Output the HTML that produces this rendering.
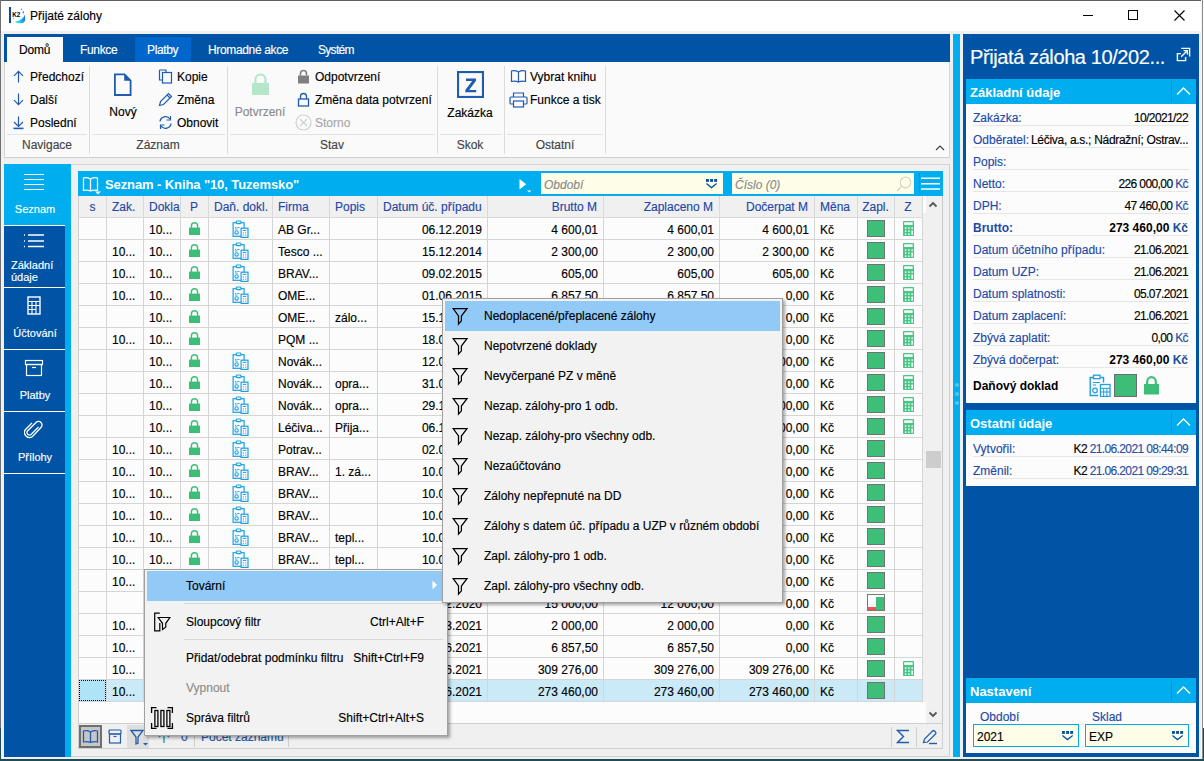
<!DOCTYPE html><html><head><meta charset="utf-8"><style>
html,body{margin:0;padding:0;}
body{width:1204px;height:761px;position:relative;overflow:hidden;background:#f0f0f0;font-family:"Liberation Sans",sans-serif;font-size:12px;color:#000;-webkit-text-stroke:0.15px currentColor;}
[style*="font-weight:bold"]{-webkit-text-stroke:0;}
div{box-sizing:border-box;}
</style></head><body>
<div style="position:absolute;left:0px;top:0px;width:1204px;height:761px;background:#f0f0f0"></div>
<div style="position:absolute;left:0px;top:0px;width:1204px;height:1px;background:#5e5e5e"></div>
<div style="position:absolute;left:0px;top:0px;width:1px;height:761px;background:#707070"></div>
<div style="position:absolute;left:1201px;top:0px;width:1px;height:761px;background:#f4f4f4"></div>
<div style="position:absolute;left:1202px;top:0px;width:1px;height:761px;background:#8a8a8a"></div>
<div style="position:absolute;left:1203px;top:0px;width:1px;height:761px;background:#ffffff"></div>
<div style="position:absolute;left:1203px;top:728px;width:1px;height:33px;background:#1e4d58"></div>
<div style="position:absolute;left:0px;top:728px;width:1px;height:33px;background:#1e4d58"></div>
<div style="position:absolute;left:0px;top:759px;width:1204px;height:2px;background:#1e4d58"></div>
<div style="position:absolute;left:1px;top:1px;width:1200px;height:30px;background:#ffffff"></div>
<svg style="position:absolute;left:8px;top:6px;" width="19" height="19" viewBox="0 0 19 19"><defs><linearGradient id="k2g" x1="0" y1="0" x2="1" y2="0"><stop offset="0" stop-color="#3ef0c8"/><stop offset="0.5" stop-color="#1ad0f0"/><stop offset="1" stop-color="#1a6ff0"/></linearGradient></defs><rect x="1" y="1" width="2" height="16" fill="#0d48a0"/><text x="4.3" y="11" font-family="Liberation Sans" font-weight="bold" font-size="6.3" fill="#000">K2</text><path d="M7 15.5 Q11 15 13.5 13 Q16 11.5 17 8.5 L17.2 14 Q16.5 17 13 17.2 L9 17 Z" fill="url(#k2g)"/><circle cx="13.5" cy="3.2" r="0.8" fill="#4a8cf0"/><ellipse cx="15.3" cy="6.3" rx="0.6" ry="1.3" fill="#3a7ef0"/><circle cx="5.5" cy="12.5" r="0.6" fill="#8ab4f0"/></svg>
<div style="position:absolute;left:30px;top:9px;white-space:nowrap;font-size:12px;line-height:14px;color:#000">Přijaté zálohy</div>
<div style="position:absolute;left:1083px;top:15px;width:10px;height:1px;background:#000"></div>
<div style="position:absolute;left:1128px;top:10px;width:10px;height:10px;border:1px solid #000"></div>
<svg style="position:absolute;left:1174px;top:10px;" width="11" height="11" viewBox="0 0 11 11"><path d="M0.5 0.5 L10.5 10.5 M10.5 0.5 L0.5 10.5" stroke="#000" stroke-width="1.1"/></svg>
<div style="position:absolute;left:4px;top:34px;width:946px;height:28px;background:#0053a5"></div>
<div style="position:absolute;left:7px;top:37px;width:56px;height:25px;background:#fafafa"></div>
<div style="position:absolute;left:135px;top:37px;width:56px;height:25px;background:#0066cc"></div>
<div style="position:absolute;left:19px;top:43px;white-space:nowrap;font-size:12px;line-height:14px;color:#000;letter-spacing:-0.2px">Domů</div>
<div style="position:absolute;left:80px;top:43px;white-space:nowrap;font-size:12px;line-height:14px;color:#fff;letter-spacing:-0.35px">Funkce</div>
<div style="position:absolute;left:147px;top:43px;white-space:nowrap;font-size:12px;line-height:14px;color:#fff;letter-spacing:-0.35px">Platby</div>
<div style="position:absolute;left:208px;top:43px;white-space:nowrap;font-size:12px;line-height:14px;color:#fff;letter-spacing:-0.35px">Hromadné akce</div>
<div style="position:absolute;left:318px;top:43px;white-space:nowrap;font-size:12px;line-height:14px;color:#fff;letter-spacing:-0.7px">Systém</div>
<div style="position:absolute;left:4px;top:62px;width:946px;height:96px;background:#fafafa;border-left:1px solid #d5d5d5;border-right:1px solid #d5d5d5;border-bottom:1px solid #cfcfcf"></div>
<div style="position:absolute;left:89px;top:66px;width:1px;height:88px;background:#dcdcdc"></div>
<div style="position:absolute;left:227px;top:66px;width:1px;height:88px;background:#dcdcdc"></div>
<div style="position:absolute;left:437px;top:66px;width:1px;height:88px;background:#dcdcdc"></div>
<div style="position:absolute;left:504px;top:66px;width:1px;height:88px;background:#dcdcdc"></div>
<div style="position:absolute;left:605px;top:66px;width:1px;height:88px;background:#dcdcdc"></div>
<div style="position:absolute;left:7px;top:134px;width:80px;height:1px;background:#e3e3e3"></div>
<div style="position:absolute;left:92px;top:134px;width:133px;height:1px;background:#e3e3e3"></div>
<div style="position:absolute;left:230px;top:134px;width:205px;height:1px;background:#e3e3e3"></div>
<div style="position:absolute;left:440px;top:134px;width:62px;height:1px;background:#e3e3e3"></div>
<div style="position:absolute;left:507px;top:134px;width:96px;height:1px;background:#e3e3e3"></div>
<div style="position:absolute;left:-153px;width:400px;text-align:center;top:138px;white-space:nowrap;font-size:12px;line-height:14px;color:#444">Navigace</div>
<div style="position:absolute;left:-42px;width:400px;text-align:center;top:138px;white-space:nowrap;font-size:12px;line-height:14px;color:#444">Záznam</div>
<div style="position:absolute;left:132px;width:400px;text-align:center;top:138px;white-space:nowrap;font-size:12px;line-height:14px;color:#444">Stav</div>
<div style="position:absolute;left:270px;width:400px;text-align:center;top:138px;white-space:nowrap;font-size:12px;line-height:14px;color:#444">Skok</div>
<div style="position:absolute;left:355px;width:400px;text-align:center;top:138px;white-space:nowrap;font-size:12px;line-height:14px;color:#444">Ostatní</div>
<svg style="position:absolute;left:935px;top:145px;" width="10" height="6" viewBox="0 0 10 6"><path d="M1 5 L5 1 L9 5" stroke="#444" stroke-width="1.2" fill="none"/></svg>
<svg style="position:absolute;left:12px;top:69px;" width="13" height="15" viewBox="0 0 13 15"><path d="M6.5 13.5 V2.3 M2 6.8 L6.5 2.3 L11 6.8" stroke="#1f5cae" stroke-width="1.2" fill="none"/></svg>
<svg style="position:absolute;left:12px;top:92px;" width="13" height="15" viewBox="0 0 13 15"><path d="M6.5 1.5 V12.7 M2 8.2 L6.5 12.7 L11 8.2" stroke="#1f5cae" stroke-width="1.2" fill="none"/></svg>
<svg style="position:absolute;left:12px;top:115px;" width="13" height="15" viewBox="0 0 13 15"><path d="M6.5 1.5 V11.5 M2 7 L6.5 11.5 L11 7" stroke="#1f5cae" stroke-width="1.2" fill="none"/><path d="M1.5 13.4 H11.5" stroke="#1f5cae" stroke-width="1.6"/></svg>
<div style="position:absolute;left:30px;top:70px;white-space:nowrap;font-size:12px;line-height:14px;">Předchozí</div>
<div style="position:absolute;left:30px;top:93px;white-space:nowrap;font-size:12px;line-height:14px;">Další</div>
<div style="position:absolute;left:30px;top:116px;white-space:nowrap;font-size:12px;line-height:14px;">Poslední</div>
<svg style="position:absolute;left:113px;top:73px;" width="20" height="24" viewBox="0 0 20 24"><path d="M1.9 1.4 L11.5 1.4 L17.6 7.5 L17.6 22 L1.9 22 Z" stroke="#1f5cae" stroke-width="1.8" fill="none"/><path d="M11.2 1.4 L11.2 7.8 L17.6 7.8 Z" fill="#1f5cae"/></svg>
<div style="position:absolute;left:-77px;width:400px;text-align:center;top:105px;white-space:nowrap;font-size:12px;line-height:14px;">Nový</div>
<svg style="position:absolute;left:158px;top:69px;" width="15" height="15" viewBox="0 0 15 15"><path d="M1.5 1 L8 1 L8 3 M1.5 1 L1.5 11 L4 11" stroke="#1f5cae" stroke-width="1.2" fill="none"/><rect x="4.5" y="3.5" width="9" height="10.5" stroke="#1f5cae" stroke-width="1.2" fill="none"/></svg>
<div style="position:absolute;left:177px;top:70px;white-space:nowrap;font-size:12px;line-height:14px;">Kopie</div>
<svg style="position:absolute;left:158px;top:92px;" width="15" height="15" viewBox="0 0 15 15"><path d="M1.5 13.5 L2.5 9.5 L10.5 1.5 L13.5 4.5 L5.5 12.5 Z M9 3 L12 6" stroke="#1f5cae" stroke-width="1.2" fill="none"/></svg>
<div style="position:absolute;left:177px;top:93px;white-space:nowrap;font-size:12px;line-height:14px;">Změna</div>
<svg style="position:absolute;left:158px;top:115px;" width="15" height="15" viewBox="0 0 15 15"><path d="M2 6.5 A5.5 5.5 0 0 1 12 4 M13 8.5 A5.5 5.5 0 0 1 3 11" stroke="#1f5cae" stroke-width="1.3" fill="none"/><path d="M12.5 1 L12.5 5 L8.5 5" stroke="#1f5cae" stroke-width="1.2" fill="none"/><path d="M2.5 14 L2.5 10 L6.5 10" stroke="#1f5cae" stroke-width="1.2" fill="none"/></svg>
<div style="position:absolute;left:177px;top:116px;white-space:nowrap;font-size:12px;line-height:14px;">Obnovit</div>
<svg style="position:absolute;left:251px;top:73px;" width="19" height="23" viewBox="0 0 19 23"><path d="M4.5 10 L4.5 6.5 A5 5 0 0 1 14.5 6.5 L14.5 10" stroke="#b5e6c9" stroke-width="2.2" fill="none"/><rect x="1" y="10" width="17" height="12" fill="#b5e6c9"/></svg>
<div style="position:absolute;left:60px;width:400px;text-align:center;top:105px;white-space:nowrap;font-size:12px;line-height:14px;color:#8c8c8c">Potvrzení</div>
<svg style="position:absolute;left:297px;top:69px;" width="13" height="15" viewBox="0 0 13 15"><path d="M3.5 6.5 L3.5 4.5 A3 3 0 0 1 9.5 4.5 L9.5 6.5" stroke="#808080" stroke-width="1.6" fill="none"/><rect x="1" y="6.5" width="11" height="8" fill="#808080"/></svg>
<div style="position:absolute;left:315px;top:70px;white-space:nowrap;font-size:12px;line-height:14px;">Odpotvrzení</div>
<svg style="position:absolute;left:297px;top:92px;" width="13" height="15" viewBox="0 0 13 15"><path d="M3.5 7 L3.5 4.5 A3 3 0 0 1 9.5 4.5 L9.5 7" stroke="#1f5cae" stroke-width="1.3" fill="none"/><rect x="1.5" y="7" width="10" height="7" stroke="#1f5cae" stroke-width="1.3" fill="none"/></svg>
<div style="position:absolute;left:315px;top:93px;white-space:nowrap;font-size:12px;line-height:14px;">Změna data potvrzení</div>
<svg style="position:absolute;left:295px;top:114px;" width="17" height="17" viewBox="0 0 17 17"><circle cx="8.5" cy="8.5" r="7.5" stroke="#cfcfcf" stroke-width="1.2" fill="none"/><path d="M5 5 L12 12 M12 5 L5 12" stroke="#cfcfcf" stroke-width="1.1"/></svg>
<div style="position:absolute;left:315px;top:116px;white-space:nowrap;font-size:12px;line-height:14px;color:#a8a8a8">Storno</div>
<svg style="position:absolute;left:457px;top:71px;" width="27" height="27" viewBox="0 0 27 27"><rect x="1.05" y="1.05" width="24.9" height="24.9" stroke="#1f5cae" stroke-width="2.1" fill="none"/><path d="M9 7.6 H19 V9.8 L12.1 18.9 H19.2 V21.2 H8.3 V19 L15.2 9.9 H9 Z" fill="#1f5cae"/></svg>
<div style="position:absolute;left:270px;width:400px;text-align:center;top:106px;white-space:nowrap;font-size:12px;line-height:14px;">Zakázka</div>
<svg style="position:absolute;left:510px;top:69px;" width="17" height="14" viewBox="0 0 17 14"><path d="M8.5 3 Q5 1 1.5 2 L1.5 12.5 Q5 11.5 8.5 13 Q12 11.5 15.5 12.5 L15.5 2 Q12 1 8.5 3 Z M8.5 3 L8.5 13" stroke="#1f5cae" stroke-width="1.2" fill="none"/></svg>
<div style="position:absolute;left:530px;top:70px;white-space:nowrap;font-size:12px;line-height:14px;">Vybrat knihu</div>
<svg style="position:absolute;left:509px;top:92px;" width="19" height="16" viewBox="0 0 19 16"><path d="M4.5 5 L4.5 1 L14.5 1 L14.5 5" stroke="#1f5cae" stroke-width="1.2" fill="none"/><rect x="1" y="5" width="17" height="7" rx="1" stroke="#1f5cae" stroke-width="1.2" fill="none"/><rect x="4.5" y="9" width="10" height="6" stroke="#1f5cae" stroke-width="1.2" fill="#fafafa"/></svg>
<div style="position:absolute;left:530px;top:93px;white-space:nowrap;font-size:12px;line-height:14px;">Funkce a tisk</div>
<div style="position:absolute;left:4px;top:164px;width:946px;height:593px;background:#f0f0f0;border-right:1px solid #cfcfcf;border-bottom:1px solid #cfcfcf"></div>
<div style="position:absolute;left:71px;top:164px;width:879px;height:1px;background:#d4d4d4"></div>
<div style="position:absolute;left:4px;top:164px;width:67px;height:593px;background:#00adef"></div>
<div style="position:absolute;left:4px;top:225px;width:61px;height:1px;background:#ffffff"></div>
<div style="position:absolute;left:4px;top:226px;width:61px;height:61px;background:#0053a5"></div>
<div style="position:absolute;left:4px;top:287px;width:61px;height:1px;background:#ffffff"></div>
<div style="position:absolute;left:4px;top:288px;width:61px;height:61px;background:#0053a5"></div>
<div style="position:absolute;left:4px;top:349px;width:61px;height:1px;background:#ffffff"></div>
<div style="position:absolute;left:4px;top:350px;width:61px;height:61px;background:#0053a5"></div>
<div style="position:absolute;left:4px;top:411px;width:61px;height:1px;background:#ffffff"></div>
<div style="position:absolute;left:4px;top:412px;width:61px;height:61px;background:#0053a5"></div>
<div style="position:absolute;left:4px;top:473px;width:61px;height:1px;background:#ffffff"></div>
<div style="position:absolute;left:4px;top:474px;width:61px;height:283px;background:#0053a5"></div>
<svg style="position:absolute;left:24px;top:173px;" width="21" height="18" viewBox="0 0 21 18"><path d="M0 1.5 H20 M0 6.5 H20 M0 11.5 H20 M0 16.5 H20" stroke="#fff" stroke-width="1.2"/></svg>
<div style="position:absolute;left:-165px;width:400px;text-align:center;top:203px;white-space:nowrap;font-size:11px;line-height:13px;color:#fff">Seznam</div>
<svg style="position:absolute;left:23px;top:233px;" width="22" height="16" viewBox="0 0 22 16"><path d="M5 2 H21 M5 8 H21 M5 13.5 H21" stroke="#fff" stroke-width="1.3"/><path d="M1 2 H2 M1 8 H2 M1 13.5 H2" stroke="#fff" stroke-width="1.3"/></svg>
<div style="position:absolute;left:11px;top:259px;white-space:nowrap;font-size:11px;line-height:13px;color:#fff">Základní</div>
<div style="position:absolute;left:11px;top:271px;white-space:nowrap;font-size:11px;line-height:13px;color:#fff">údaje</div>
<svg style="position:absolute;left:27px;top:296px;" width="14" height="19" viewBox="0 0 14 19"><rect x="1" y="1" width="12" height="17" stroke="#fff" stroke-width="1.4" fill="none"/><path d="M1 5.5 H13 M1 9.5 H13 M1 13.5 H9 M5 5.5 V18 M9 5.5 V18" stroke="#fff" stroke-width="1.1"/></svg>
<div style="position:absolute;left:-165px;width:400px;text-align:center;top:327px;white-space:nowrap;font-size:11px;line-height:13px;color:#fff">Účtování</div>
<svg style="position:absolute;left:24px;top:359px;" width="20" height="18" viewBox="0 0 20 18"><rect x="1.5" y="1.5" width="17" height="4" stroke="#fff" stroke-width="1.2" fill="none"/><rect x="2.5" y="5.5" width="15" height="11" stroke="#fff" stroke-width="1.2" fill="none"/><path d="M8 8.5 H12" stroke="#fff" stroke-width="1.2"/></svg>
<div style="position:absolute;left:-165px;width:400px;text-align:center;top:389px;white-space:nowrap;font-size:11px;line-height:13px;color:#fff">Platby</div>
<svg style="position:absolute;left:24px;top:420px;" width="20" height="21" viewBox="0 0 20 21"><path d="M14.5 7 L7 14.5 A2.5 2.5 0 0 1 3.5 11 L12 2.5 A3.5 3.5 0 0 1 17 7.5 L8.5 16.5 A5 5 0 0 1 1.5 9.5 L8 3" stroke="#fff" stroke-width="1.3" fill="none" transform="rotate(0)"/></svg>
<div style="position:absolute;left:-165px;width:400px;text-align:center;top:451px;white-space:nowrap;font-size:11px;line-height:13px;color:#fff">Přílohy</div>
<div style="position:absolute;left:78px;top:171px;width:865px;height:25px;background:#00adef"></div>
<svg style="position:absolute;left:82px;top:176px;" width="20" height="19" viewBox="0 0 20 19"><path d="M8.5 3 Q5 1 1.5 2 L1.5 14.5 Q5 13.5 8.5 15 Q12 13.5 15.5 14.5 L15.5 2 Q12 1 8.5 3 Z M8.5 3 L8.5 15" stroke="#fff" stroke-width="1.3" fill="none"/><path d="M13 15.5 L19 15.5 L16 18.5 Z" fill="#fff"/></svg>
<div style="position:absolute;left:105px;top:177px;white-space:nowrap;font-size:13px;line-height:15px;color:#fff;font-weight:bold;letter-spacing:-0.1px">Seznam - Kniha "10, Tuzemsko"</div>
<svg style="position:absolute;left:519px;top:178px;" width="14" height="16" viewBox="0 0 14 16"><path d="M0.5 1 L7.2 6.3 L0.5 11.6 Z" fill="#fff"/><path d="M8 12.4 L12.5 12.4 L10.25 14.6 Z" fill="#fff"/></svg>
<div style="position:absolute;left:541px;top:173px;width:182px;height:21px;background:#fefde8"></div>
<div style="position:absolute;left:544px;top:178px;white-space:nowrap;font-size:12px;line-height:14px;color:#8a8a8a;font-style:italic">Období</div>
<svg style="position:absolute;left:706px;top:179px;" width="12" height="10" viewBox="0 0 12 10"><rect x="0" y="0" width="2.9" height="2.9" fill="#0053a5"/><rect x="4.1" y="0" width="2.9" height="2.9" fill="#0053a5"/><rect x="8.2" y="0" width="2.9" height="2.9" fill="#0053a5"/><path d="M0.4 4.4 L5.5 8.6 L10.7 4.4" stroke="#0053a5" stroke-width="1.25" fill="none"/></svg>
<div style="position:absolute;left:732px;top:173px;width:182px;height:21px;background:#fefde8"></div>
<div style="position:absolute;left:735px;top:178px;white-space:nowrap;font-size:12px;line-height:14px;color:#8a8a8a;font-style:italic">Číslo (0)</div>
<svg style="position:absolute;left:896px;top:176px;" width="16" height="16" viewBox="0 0 16 16"><circle cx="9.5" cy="6.5" r="5.3" stroke="#d5d5c8" stroke-width="1.2" fill="none"/><path d="M5.7 10.3 L1 15" stroke="#d5d5c8" stroke-width="1.4"/></svg>
<div style="position:absolute;left:919px;top:173px;width:1px;height:21px;background:#1a8fce"></div>
<svg style="position:absolute;left:921px;top:176px;" width="20" height="15" viewBox="0 0 20 15"><path d="M0 2.3 H19 M0 7.8 H19 M0 13.1 H19" stroke="#fff" stroke-width="1.5"/></svg>
<div style="position:absolute;left:78px;top:196px;width:1px;height:528px;background:#cfcfcf"></div>
<div style="position:absolute;left:79px;top:196px;width:843px;height:22px;background:#f0f0f0"></div>
<div style="position:absolute;left:79px;top:217px;width:843px;height:1px;background:#d9d9d9"></div>
<div style="position:absolute;left:79px;top:218px;width:843px;height:506px;background:#fcfcfc"></div>
<div style="position:absolute;left:79px;width:27px;top:200px;text-align:center;white-space:nowrap;overflow:hidden;line-height:14px;color:#1f48a8">s</div>
<div style="position:absolute;left:112px;width:31px;top:200px;white-space:nowrap;overflow:hidden;line-height:14px;color:#1f48a8">Zak.</div>
<div style="position:absolute;left:149px;width:31px;top:200px;white-space:nowrap;overflow:hidden;line-height:14px;color:#1f48a8">Dokla</div>
<div style="position:absolute;left:180px;width:28px;top:200px;text-align:center;white-space:nowrap;overflow:hidden;line-height:14px;color:#1f48a8">P</div>
<div style="position:absolute;left:214px;width:58px;top:200px;white-space:nowrap;overflow:hidden;line-height:14px;color:#1f48a8">Daň. dokl.</div>
<div style="position:absolute;left:278px;width:51px;top:200px;white-space:nowrap;overflow:hidden;line-height:14px;color:#1f48a8">Firma</div>
<div style="position:absolute;left:335px;width:42px;top:200px;white-space:nowrap;overflow:hidden;line-height:14px;color:#1f48a8">Popis</div>
<div style="position:absolute;left:383px;width:104px;top:200px;white-space:nowrap;overflow:hidden;line-height:14px;color:#1f48a8">Datum úč. případu</div>
<div style="position:absolute;left:487px;width:110px;top:200px;text-align:right;white-space:nowrap;overflow:hidden;line-height:14px;color:#1f48a8">Brutto M</div>
<div style="position:absolute;left:603px;width:110px;top:200px;text-align:right;white-space:nowrap;overflow:hidden;line-height:14px;color:#1f48a8">Zaplaceno M</div>
<div style="position:absolute;left:719px;width:89px;top:200px;text-align:right;white-space:nowrap;overflow:hidden;line-height:14px;color:#1f48a8">Dočerpat M</div>
<div style="position:absolute;left:820px;width:37px;top:200px;white-space:nowrap;overflow:hidden;line-height:14px;color:#1f48a8">Měna</div>
<div style="position:absolute;left:857px;width:37px;top:200px;text-align:center;white-space:nowrap;overflow:hidden;line-height:14px;color:#1f48a8">Zapl.</div>
<div style="position:absolute;left:894px;width:28px;top:200px;text-align:center;white-space:nowrap;overflow:hidden;line-height:14px;color:#1f48a8">Z</div>
<div style="position:absolute;left:106px;top:196px;width:1px;height:22px;background:#d9d9d9"></div>
<div style="position:absolute;left:143px;top:196px;width:1px;height:22px;background:#d9d9d9"></div>
<div style="position:absolute;left:180px;top:196px;width:1px;height:22px;background:#d9d9d9"></div>
<div style="position:absolute;left:208px;top:196px;width:1px;height:22px;background:#d9d9d9"></div>
<div style="position:absolute;left:272px;top:196px;width:1px;height:22px;background:#d9d9d9"></div>
<div style="position:absolute;left:329px;top:196px;width:1px;height:22px;background:#d9d9d9"></div>
<div style="position:absolute;left:377px;top:196px;width:1px;height:22px;background:#d9d9d9"></div>
<div style="position:absolute;left:487px;top:196px;width:1px;height:22px;background:#d9d9d9"></div>
<div style="position:absolute;left:603px;top:196px;width:1px;height:22px;background:#d9d9d9"></div>
<div style="position:absolute;left:719px;top:196px;width:1px;height:22px;background:#d9d9d9"></div>
<div style="position:absolute;left:814px;top:196px;width:1px;height:22px;background:#d9d9d9"></div>
<div style="position:absolute;left:857px;top:196px;width:1px;height:22px;background:#d9d9d9"></div>
<div style="position:absolute;left:894px;top:196px;width:1px;height:22px;background:#d9d9d9"></div>
<div style="position:absolute;left:922px;top:196px;width:1px;height:22px;background:#d9d9d9"></div>
<div style="position:absolute;left:923px;top:196px;width:19px;height:528px;background:#f0f0f0"></div>
<div style="position:absolute;left:923px;top:196px;width:3px;height:17px;background:#fcfcfc"></div>
<div style="position:absolute;left:922px;top:702px;width:4px;height:21px;background:#fcfcfc"></div>
<div style="position:absolute;left:942px;top:196px;width:1px;height:528px;background:#c8c8c8"></div>
<svg style="position:absolute;left:928px;top:201px;" width="10" height="7" viewBox="0 0 10 7"><path d="M1.5 5.5 L5 2 L8.5 5.5" stroke="#555" stroke-width="1.8" fill="none"/></svg>
<svg style="position:absolute;left:928px;top:711px;" width="10" height="7" viewBox="0 0 10 7"><path d="M1.5 1.5 L5 5 L8.5 1.5" stroke="#555" stroke-width="1.8" fill="none"/></svg>
<div style="position:absolute;left:926px;top:451px;width:15px;height:17px;background:#cdcdcd"></div>
<div style="position:absolute;left:79px;top:239px;width:843px;height:1px;background:#d5d5d5"></div>
<div style="position:absolute;left:149px;top:223px;white-space:nowrap;line-height:14px">10...</div>
<svg style="position:absolute;left:189px;top:222px;" width="12" height="14" viewBox="0 0 12 14"><path d="M2.4 6 V3.9 A3.1 3.1 0 0 1 8.6 3.9 V6" stroke="#3cbe78" stroke-width="1.4" fill="none"/><rect x="0" y="5.6" width="11" height="7.4" fill="#3cbe78"/></svg>
<svg style="position:absolute;left:232px;top:220px;" width="17" height="18" viewBox="0 0 17 18"><rect x="1.1" y="2.7" width="11" height="13.6" stroke="#1a9fe3" stroke-width="1.2" fill="none"/><rect x="4.3" y="1" width="4.6" height="2.6" rx="0.8" fill="#fcfcfc" stroke="#1a9fe3" stroke-width="1.1"/><path d="M3 7.5 H4.3 M5.3 7.5 H7.5 M3 9 H5.5" stroke="#1a9fe3" stroke-width="0.9"/><circle cx="4.6" cy="12.4" r="1.7" stroke="#1a9fe3" stroke-width="1.1" fill="none"/><rect x="9.1" y="8.2" width="6.9" height="9.2" stroke="#1a9fe3" stroke-width="1.2" fill="#fcfcfc"/><path d="M10.8 10.4 H14.3 M10.8 12.9 H11.9 M13.2 12.9 H14.3 M10.8 15.2 H11.9 M13.2 15.2 H14.3" stroke="#1a9fe3" stroke-width="1"/></svg>
<div style="position:absolute;left:278px;top:223px;white-space:nowrap;line-height:14px">AB Gr...</div>
<div style="position:absolute;left:377px;width:105px;top:223px;text-align:right;white-space:nowrap;line-height:14px">06.12.2019</div>
<div style="position:absolute;left:487px;width:111px;top:223px;text-align:right;white-space:nowrap;line-height:14px">4 600,01</div>
<div style="position:absolute;left:603px;width:111px;top:223px;text-align:right;white-space:nowrap;line-height:14px">4 600,01</div>
<div style="position:absolute;left:719px;width:90px;top:223px;text-align:right;white-space:nowrap;line-height:14px">4 600,01</div>
<div style="position:absolute;left:820px;top:223px;white-space:nowrap;line-height:14px">Kč</div>
<div style="position:absolute;left:867px;top:220px;width:18px;height:17px;background:#3dbf79;border:1px solid #727272"></div>
<svg style="position:absolute;left:903px;top:221px;" width="11" height="15" viewBox="0 0 11 15"><rect x="0" y="0" width="11" height="15" rx="0.8" fill="#4ac585"/><rect x="1.2" y="1.3" width="8.5" height="2.6" fill="#fcfcfc"/><g fill="#fcfcfc"><rect x="1.9" y="6.4" width="1.5" height="1.5"/><rect x="5.2" y="6.4" width="1.5" height="1.5"/><rect x="8.4" y="6.4" width="1.5" height="1.5"/><rect x="1.9" y="9.4" width="1.5" height="1.5"/><rect x="5.2" y="9.4" width="1.5" height="1.5"/><rect x="8.4" y="9.4" width="1.5" height="4.4"/><rect x="1.9" y="12.4" width="1.5" height="1.5"/><rect x="5.2" y="12.4" width="1.5" height="1.5"/></g></svg>
<div style="position:absolute;left:79px;top:261px;width:843px;height:1px;background:#d5d5d5"></div>
<div style="position:absolute;left:112px;top:245px;white-space:nowrap;line-height:14px">10...</div>
<div style="position:absolute;left:149px;top:245px;white-space:nowrap;line-height:14px">10...</div>
<svg style="position:absolute;left:189px;top:244px;" width="12" height="14" viewBox="0 0 12 14"><path d="M2.4 6 V3.9 A3.1 3.1 0 0 1 8.6 3.9 V6" stroke="#3cbe78" stroke-width="1.4" fill="none"/><rect x="0" y="5.6" width="11" height="7.4" fill="#3cbe78"/></svg>
<svg style="position:absolute;left:232px;top:242px;" width="17" height="18" viewBox="0 0 17 18"><rect x="1.1" y="2.7" width="11" height="13.6" stroke="#1a9fe3" stroke-width="1.2" fill="none"/><rect x="4.3" y="1" width="4.6" height="2.6" rx="0.8" fill="#fcfcfc" stroke="#1a9fe3" stroke-width="1.1"/><path d="M3 7.5 H4.3 M5.3 7.5 H7.5 M3 9 H5.5" stroke="#1a9fe3" stroke-width="0.9"/><circle cx="4.6" cy="12.4" r="1.7" stroke="#1a9fe3" stroke-width="1.1" fill="none"/><rect x="9.1" y="8.2" width="6.9" height="9.2" stroke="#1a9fe3" stroke-width="1.2" fill="#fcfcfc"/><path d="M10.8 10.4 H14.3 M10.8 12.9 H11.9 M13.2 12.9 H14.3 M10.8 15.2 H11.9 M13.2 15.2 H14.3" stroke="#1a9fe3" stroke-width="1"/></svg>
<div style="position:absolute;left:278px;top:245px;white-space:nowrap;line-height:14px">Tesco ...</div>
<div style="position:absolute;left:377px;width:105px;top:245px;text-align:right;white-space:nowrap;line-height:14px">15.12.2014</div>
<div style="position:absolute;left:487px;width:111px;top:245px;text-align:right;white-space:nowrap;line-height:14px">2 300,00</div>
<div style="position:absolute;left:603px;width:111px;top:245px;text-align:right;white-space:nowrap;line-height:14px">2 300,00</div>
<div style="position:absolute;left:719px;width:90px;top:245px;text-align:right;white-space:nowrap;line-height:14px">2 300,00</div>
<div style="position:absolute;left:820px;top:245px;white-space:nowrap;line-height:14px">Kč</div>
<div style="position:absolute;left:867px;top:242px;width:18px;height:17px;background:#3dbf79;border:1px solid #727272"></div>
<svg style="position:absolute;left:903px;top:243px;" width="11" height="15" viewBox="0 0 11 15"><rect x="0" y="0" width="11" height="15" rx="0.8" fill="#4ac585"/><rect x="1.2" y="1.3" width="8.5" height="2.6" fill="#fcfcfc"/><g fill="#fcfcfc"><rect x="1.9" y="6.4" width="1.5" height="1.5"/><rect x="5.2" y="6.4" width="1.5" height="1.5"/><rect x="8.4" y="6.4" width="1.5" height="1.5"/><rect x="1.9" y="9.4" width="1.5" height="1.5"/><rect x="5.2" y="9.4" width="1.5" height="1.5"/><rect x="8.4" y="9.4" width="1.5" height="4.4"/><rect x="1.9" y="12.4" width="1.5" height="1.5"/><rect x="5.2" y="12.4" width="1.5" height="1.5"/></g></svg>
<div style="position:absolute;left:79px;top:283px;width:843px;height:1px;background:#d5d5d5"></div>
<div style="position:absolute;left:112px;top:267px;white-space:nowrap;line-height:14px">10...</div>
<div style="position:absolute;left:149px;top:267px;white-space:nowrap;line-height:14px">10...</div>
<svg style="position:absolute;left:189px;top:266px;" width="12" height="14" viewBox="0 0 12 14"><path d="M2.4 6 V3.9 A3.1 3.1 0 0 1 8.6 3.9 V6" stroke="#3cbe78" stroke-width="1.4" fill="none"/><rect x="0" y="5.6" width="11" height="7.4" fill="#3cbe78"/></svg>
<svg style="position:absolute;left:232px;top:264px;" width="17" height="18" viewBox="0 0 17 18"><rect x="1.1" y="2.7" width="11" height="13.6" stroke="#1a9fe3" stroke-width="1.2" fill="none"/><rect x="4.3" y="1" width="4.6" height="2.6" rx="0.8" fill="#fcfcfc" stroke="#1a9fe3" stroke-width="1.1"/><path d="M3 7.5 H4.3 M5.3 7.5 H7.5 M3 9 H5.5" stroke="#1a9fe3" stroke-width="0.9"/><circle cx="4.6" cy="12.4" r="1.7" stroke="#1a9fe3" stroke-width="1.1" fill="none"/><rect x="9.1" y="8.2" width="6.9" height="9.2" stroke="#1a9fe3" stroke-width="1.2" fill="#fcfcfc"/><path d="M10.8 10.4 H14.3 M10.8 12.9 H11.9 M13.2 12.9 H14.3 M10.8 15.2 H11.9 M13.2 15.2 H14.3" stroke="#1a9fe3" stroke-width="1"/></svg>
<div style="position:absolute;left:278px;top:267px;white-space:nowrap;line-height:14px">BRAV...</div>
<div style="position:absolute;left:377px;width:105px;top:267px;text-align:right;white-space:nowrap;line-height:14px">09.02.2015</div>
<div style="position:absolute;left:487px;width:111px;top:267px;text-align:right;white-space:nowrap;line-height:14px">605,00</div>
<div style="position:absolute;left:603px;width:111px;top:267px;text-align:right;white-space:nowrap;line-height:14px">605,00</div>
<div style="position:absolute;left:719px;width:90px;top:267px;text-align:right;white-space:nowrap;line-height:14px">605,00</div>
<div style="position:absolute;left:820px;top:267px;white-space:nowrap;line-height:14px">Kč</div>
<div style="position:absolute;left:867px;top:264px;width:18px;height:17px;background:#3dbf79;border:1px solid #727272"></div>
<svg style="position:absolute;left:903px;top:265px;" width="11" height="15" viewBox="0 0 11 15"><rect x="0" y="0" width="11" height="15" rx="0.8" fill="#4ac585"/><rect x="1.2" y="1.3" width="8.5" height="2.6" fill="#fcfcfc"/><g fill="#fcfcfc"><rect x="1.9" y="6.4" width="1.5" height="1.5"/><rect x="5.2" y="6.4" width="1.5" height="1.5"/><rect x="8.4" y="6.4" width="1.5" height="1.5"/><rect x="1.9" y="9.4" width="1.5" height="1.5"/><rect x="5.2" y="9.4" width="1.5" height="1.5"/><rect x="8.4" y="9.4" width="1.5" height="4.4"/><rect x="1.9" y="12.4" width="1.5" height="1.5"/><rect x="5.2" y="12.4" width="1.5" height="1.5"/></g></svg>
<div style="position:absolute;left:79px;top:305px;width:843px;height:1px;background:#d5d5d5"></div>
<div style="position:absolute;left:112px;top:289px;white-space:nowrap;line-height:14px">10...</div>
<div style="position:absolute;left:149px;top:289px;white-space:nowrap;line-height:14px">10...</div>
<svg style="position:absolute;left:189px;top:288px;" width="12" height="14" viewBox="0 0 12 14"><path d="M2.4 6 V3.9 A3.1 3.1 0 0 1 8.6 3.9 V6" stroke="#3cbe78" stroke-width="1.4" fill="none"/><rect x="0" y="5.6" width="11" height="7.4" fill="#3cbe78"/></svg>
<svg style="position:absolute;left:232px;top:286px;" width="17" height="18" viewBox="0 0 17 18"><rect x="1.1" y="2.7" width="11" height="13.6" stroke="#1a9fe3" stroke-width="1.2" fill="none"/><rect x="4.3" y="1" width="4.6" height="2.6" rx="0.8" fill="#fcfcfc" stroke="#1a9fe3" stroke-width="1.1"/><path d="M3 7.5 H4.3 M5.3 7.5 H7.5 M3 9 H5.5" stroke="#1a9fe3" stroke-width="0.9"/><circle cx="4.6" cy="12.4" r="1.7" stroke="#1a9fe3" stroke-width="1.1" fill="none"/><rect x="9.1" y="8.2" width="6.9" height="9.2" stroke="#1a9fe3" stroke-width="1.2" fill="#fcfcfc"/><path d="M10.8 10.4 H14.3 M10.8 12.9 H11.9 M13.2 12.9 H14.3 M10.8 15.2 H11.9 M13.2 15.2 H14.3" stroke="#1a9fe3" stroke-width="1"/></svg>
<div style="position:absolute;left:278px;top:289px;white-space:nowrap;line-height:14px">OME...</div>
<div style="position:absolute;left:377px;width:105px;top:289px;text-align:right;white-space:nowrap;line-height:14px">01.06.2015</div>
<div style="position:absolute;left:487px;width:111px;top:289px;text-align:right;white-space:nowrap;line-height:14px">6 857,50</div>
<div style="position:absolute;left:603px;width:111px;top:289px;text-align:right;white-space:nowrap;line-height:14px">6 857,50</div>
<div style="position:absolute;left:719px;width:90px;top:289px;text-align:right;white-space:nowrap;line-height:14px">0,00</div>
<div style="position:absolute;left:820px;top:289px;white-space:nowrap;line-height:14px">Kč</div>
<div style="position:absolute;left:867px;top:286px;width:18px;height:17px;background:#3dbf79;border:1px solid #727272"></div>
<svg style="position:absolute;left:903px;top:287px;" width="11" height="15" viewBox="0 0 11 15"><rect x="0" y="0" width="11" height="15" rx="0.8" fill="#4ac585"/><rect x="1.2" y="1.3" width="8.5" height="2.6" fill="#fcfcfc"/><g fill="#fcfcfc"><rect x="1.9" y="6.4" width="1.5" height="1.5"/><rect x="5.2" y="6.4" width="1.5" height="1.5"/><rect x="8.4" y="6.4" width="1.5" height="1.5"/><rect x="1.9" y="9.4" width="1.5" height="1.5"/><rect x="5.2" y="9.4" width="1.5" height="1.5"/><rect x="8.4" y="9.4" width="1.5" height="4.4"/><rect x="1.9" y="12.4" width="1.5" height="1.5"/><rect x="5.2" y="12.4" width="1.5" height="1.5"/></g></svg>
<div style="position:absolute;left:79px;top:327px;width:843px;height:1px;background:#d5d5d5"></div>
<div style="position:absolute;left:149px;top:311px;white-space:nowrap;line-height:14px">10...</div>
<svg style="position:absolute;left:189px;top:310px;" width="12" height="14" viewBox="0 0 12 14"><path d="M2.4 6 V3.9 A3.1 3.1 0 0 1 8.6 3.9 V6" stroke="#3cbe78" stroke-width="1.4" fill="none"/><rect x="0" y="5.6" width="11" height="7.4" fill="#3cbe78"/></svg>
<div style="position:absolute;left:278px;top:311px;white-space:nowrap;line-height:14px">OME...</div>
<div style="position:absolute;left:335px;top:311px;white-space:nowrap;line-height:14px">zálo...</div>
<div style="position:absolute;left:377px;width:105px;top:311px;text-align:right;white-space:nowrap;line-height:14px">15.12.2015</div>
<div style="position:absolute;left:487px;width:111px;top:311px;text-align:right;white-space:nowrap;line-height:14px">6 000,00</div>
<div style="position:absolute;left:603px;width:111px;top:311px;text-align:right;white-space:nowrap;line-height:14px">6 000,00</div>
<div style="position:absolute;left:719px;width:90px;top:311px;text-align:right;white-space:nowrap;line-height:14px">0,00</div>
<div style="position:absolute;left:820px;top:311px;white-space:nowrap;line-height:14px">Kč</div>
<div style="position:absolute;left:867px;top:308px;width:18px;height:17px;background:#3dbf79;border:1px solid #727272"></div>
<svg style="position:absolute;left:903px;top:309px;" width="11" height="15" viewBox="0 0 11 15"><rect x="0" y="0" width="11" height="15" rx="0.8" fill="#4ac585"/><rect x="1.2" y="1.3" width="8.5" height="2.6" fill="#fcfcfc"/><g fill="#fcfcfc"><rect x="1.9" y="6.4" width="1.5" height="1.5"/><rect x="5.2" y="6.4" width="1.5" height="1.5"/><rect x="8.4" y="6.4" width="1.5" height="1.5"/><rect x="1.9" y="9.4" width="1.5" height="1.5"/><rect x="5.2" y="9.4" width="1.5" height="1.5"/><rect x="8.4" y="9.4" width="1.5" height="4.4"/><rect x="1.9" y="12.4" width="1.5" height="1.5"/><rect x="5.2" y="12.4" width="1.5" height="1.5"/></g></svg>
<div style="position:absolute;left:79px;top:349px;width:843px;height:1px;background:#d5d5d5"></div>
<div style="position:absolute;left:112px;top:333px;white-space:nowrap;line-height:14px">10...</div>
<div style="position:absolute;left:149px;top:333px;white-space:nowrap;line-height:14px">10...</div>
<svg style="position:absolute;left:189px;top:332px;" width="12" height="14" viewBox="0 0 12 14"><path d="M2.4 6 V3.9 A3.1 3.1 0 0 1 8.6 3.9 V6" stroke="#3cbe78" stroke-width="1.4" fill="none"/><rect x="0" y="5.6" width="11" height="7.4" fill="#3cbe78"/></svg>
<div style="position:absolute;left:278px;top:333px;white-space:nowrap;line-height:14px">PQM ...</div>
<div style="position:absolute;left:377px;width:105px;top:333px;text-align:right;white-space:nowrap;line-height:14px">18.03.2016</div>
<div style="position:absolute;left:487px;width:111px;top:333px;text-align:right;white-space:nowrap;line-height:14px">2 000,00</div>
<div style="position:absolute;left:603px;width:111px;top:333px;text-align:right;white-space:nowrap;line-height:14px">2 000,00</div>
<div style="position:absolute;left:719px;width:90px;top:333px;text-align:right;white-space:nowrap;line-height:14px">0,00</div>
<div style="position:absolute;left:820px;top:333px;white-space:nowrap;line-height:14px">Kč</div>
<div style="position:absolute;left:867px;top:330px;width:18px;height:17px;background:#3dbf79;border:1px solid #727272"></div>
<svg style="position:absolute;left:903px;top:331px;" width="11" height="15" viewBox="0 0 11 15"><rect x="0" y="0" width="11" height="15" rx="0.8" fill="#4ac585"/><rect x="1.2" y="1.3" width="8.5" height="2.6" fill="#fcfcfc"/><g fill="#fcfcfc"><rect x="1.9" y="6.4" width="1.5" height="1.5"/><rect x="5.2" y="6.4" width="1.5" height="1.5"/><rect x="8.4" y="6.4" width="1.5" height="1.5"/><rect x="1.9" y="9.4" width="1.5" height="1.5"/><rect x="5.2" y="9.4" width="1.5" height="1.5"/><rect x="8.4" y="9.4" width="1.5" height="4.4"/><rect x="1.9" y="12.4" width="1.5" height="1.5"/><rect x="5.2" y="12.4" width="1.5" height="1.5"/></g></svg>
<div style="position:absolute;left:79px;top:371px;width:843px;height:1px;background:#d5d5d5"></div>
<div style="position:absolute;left:149px;top:355px;white-space:nowrap;line-height:14px">10...</div>
<svg style="position:absolute;left:189px;top:354px;" width="12" height="14" viewBox="0 0 12 14"><path d="M2.4 6 V3.9 A3.1 3.1 0 0 1 8.6 3.9 V6" stroke="#3cbe78" stroke-width="1.4" fill="none"/><rect x="0" y="5.6" width="11" height="7.4" fill="#3cbe78"/></svg>
<svg style="position:absolute;left:232px;top:352px;" width="17" height="18" viewBox="0 0 17 18"><rect x="1.1" y="2.7" width="11" height="13.6" stroke="#1a9fe3" stroke-width="1.2" fill="none"/><rect x="4.3" y="1" width="4.6" height="2.6" rx="0.8" fill="#fcfcfc" stroke="#1a9fe3" stroke-width="1.1"/><path d="M3 7.5 H4.3 M5.3 7.5 H7.5 M3 9 H5.5" stroke="#1a9fe3" stroke-width="0.9"/><circle cx="4.6" cy="12.4" r="1.7" stroke="#1a9fe3" stroke-width="1.1" fill="none"/><rect x="9.1" y="8.2" width="6.9" height="9.2" stroke="#1a9fe3" stroke-width="1.2" fill="#fcfcfc"/><path d="M10.8 10.4 H14.3 M10.8 12.9 H11.9 M13.2 12.9 H14.3 M10.8 15.2 H11.9 M13.2 15.2 H14.3" stroke="#1a9fe3" stroke-width="1"/></svg>
<div style="position:absolute;left:278px;top:355px;white-space:nowrap;line-height:14px">Novák...</div>
<div style="position:absolute;left:377px;width:105px;top:355px;text-align:right;white-space:nowrap;line-height:14px">12.01.2017</div>
<div style="position:absolute;left:487px;width:111px;top:355px;text-align:right;white-space:nowrap;line-height:14px">10 000,00</div>
<div style="position:absolute;left:603px;width:111px;top:355px;text-align:right;white-space:nowrap;line-height:14px">10 000,00</div>
<div style="position:absolute;left:719px;width:90px;top:355px;text-align:right;white-space:nowrap;line-height:14px">5 000,00</div>
<div style="position:absolute;left:820px;top:355px;white-space:nowrap;line-height:14px">Kč</div>
<div style="position:absolute;left:867px;top:352px;width:18px;height:17px;background:#3dbf79;border:1px solid #727272"></div>
<svg style="position:absolute;left:903px;top:353px;" width="11" height="15" viewBox="0 0 11 15"><rect x="0" y="0" width="11" height="15" rx="0.8" fill="#4ac585"/><rect x="1.2" y="1.3" width="8.5" height="2.6" fill="#fcfcfc"/><g fill="#fcfcfc"><rect x="1.9" y="6.4" width="1.5" height="1.5"/><rect x="5.2" y="6.4" width="1.5" height="1.5"/><rect x="8.4" y="6.4" width="1.5" height="1.5"/><rect x="1.9" y="9.4" width="1.5" height="1.5"/><rect x="5.2" y="9.4" width="1.5" height="1.5"/><rect x="8.4" y="9.4" width="1.5" height="4.4"/><rect x="1.9" y="12.4" width="1.5" height="1.5"/><rect x="5.2" y="12.4" width="1.5" height="1.5"/></g></svg>
<div style="position:absolute;left:79px;top:393px;width:843px;height:1px;background:#d5d5d5"></div>
<div style="position:absolute;left:149px;top:377px;white-space:nowrap;line-height:14px">10...</div>
<svg style="position:absolute;left:189px;top:376px;" width="12" height="14" viewBox="0 0 12 14"><path d="M2.4 6 V3.9 A3.1 3.1 0 0 1 8.6 3.9 V6" stroke="#3cbe78" stroke-width="1.4" fill="none"/><rect x="0" y="5.6" width="11" height="7.4" fill="#3cbe78"/></svg>
<svg style="position:absolute;left:232px;top:374px;" width="17" height="18" viewBox="0 0 17 18"><rect x="1.1" y="2.7" width="11" height="13.6" stroke="#1a9fe3" stroke-width="1.2" fill="none"/><rect x="4.3" y="1" width="4.6" height="2.6" rx="0.8" fill="#fcfcfc" stroke="#1a9fe3" stroke-width="1.1"/><path d="M3 7.5 H4.3 M5.3 7.5 H7.5 M3 9 H5.5" stroke="#1a9fe3" stroke-width="0.9"/><circle cx="4.6" cy="12.4" r="1.7" stroke="#1a9fe3" stroke-width="1.1" fill="none"/><rect x="9.1" y="8.2" width="6.9" height="9.2" stroke="#1a9fe3" stroke-width="1.2" fill="#fcfcfc"/><path d="M10.8 10.4 H14.3 M10.8 12.9 H11.9 M13.2 12.9 H14.3 M10.8 15.2 H11.9 M13.2 15.2 H14.3" stroke="#1a9fe3" stroke-width="1"/></svg>
<div style="position:absolute;left:278px;top:377px;white-space:nowrap;line-height:14px">Novák...</div>
<div style="position:absolute;left:335px;top:377px;white-space:nowrap;line-height:14px">opra...</div>
<div style="position:absolute;left:377px;width:105px;top:377px;text-align:right;white-space:nowrap;line-height:14px">31.01.2017</div>
<div style="position:absolute;left:487px;width:111px;top:377px;text-align:right;white-space:nowrap;line-height:14px">3 000,00</div>
<div style="position:absolute;left:603px;width:111px;top:377px;text-align:right;white-space:nowrap;line-height:14px">3 000,00</div>
<div style="position:absolute;left:719px;width:90px;top:377px;text-align:right;white-space:nowrap;line-height:14px">0,00</div>
<div style="position:absolute;left:820px;top:377px;white-space:nowrap;line-height:14px">Kč</div>
<div style="position:absolute;left:867px;top:374px;width:18px;height:17px;background:#3dbf79;border:1px solid #727272"></div>
<svg style="position:absolute;left:903px;top:375px;" width="11" height="15" viewBox="0 0 11 15"><rect x="0" y="0" width="11" height="15" rx="0.8" fill="#4ac585"/><rect x="1.2" y="1.3" width="8.5" height="2.6" fill="#fcfcfc"/><g fill="#fcfcfc"><rect x="1.9" y="6.4" width="1.5" height="1.5"/><rect x="5.2" y="6.4" width="1.5" height="1.5"/><rect x="8.4" y="6.4" width="1.5" height="1.5"/><rect x="1.9" y="9.4" width="1.5" height="1.5"/><rect x="5.2" y="9.4" width="1.5" height="1.5"/><rect x="8.4" y="9.4" width="1.5" height="4.4"/><rect x="1.9" y="12.4" width="1.5" height="1.5"/><rect x="5.2" y="12.4" width="1.5" height="1.5"/></g></svg>
<div style="position:absolute;left:79px;top:415px;width:843px;height:1px;background:#d5d5d5"></div>
<div style="position:absolute;left:149px;top:399px;white-space:nowrap;line-height:14px">10...</div>
<svg style="position:absolute;left:189px;top:398px;" width="12" height="14" viewBox="0 0 12 14"><path d="M2.4 6 V3.9 A3.1 3.1 0 0 1 8.6 3.9 V6" stroke="#3cbe78" stroke-width="1.4" fill="none"/><rect x="0" y="5.6" width="11" height="7.4" fill="#3cbe78"/></svg>
<svg style="position:absolute;left:232px;top:396px;" width="17" height="18" viewBox="0 0 17 18"><rect x="1.1" y="2.7" width="11" height="13.6" stroke="#1a9fe3" stroke-width="1.2" fill="none"/><rect x="4.3" y="1" width="4.6" height="2.6" rx="0.8" fill="#fcfcfc" stroke="#1a9fe3" stroke-width="1.1"/><path d="M3 7.5 H4.3 M5.3 7.5 H7.5 M3 9 H5.5" stroke="#1a9fe3" stroke-width="0.9"/><circle cx="4.6" cy="12.4" r="1.7" stroke="#1a9fe3" stroke-width="1.1" fill="none"/><rect x="9.1" y="8.2" width="6.9" height="9.2" stroke="#1a9fe3" stroke-width="1.2" fill="#fcfcfc"/><path d="M10.8 10.4 H14.3 M10.8 12.9 H11.9 M13.2 12.9 H14.3 M10.8 15.2 H11.9 M13.2 15.2 H14.3" stroke="#1a9fe3" stroke-width="1"/></svg>
<div style="position:absolute;left:278px;top:399px;white-space:nowrap;line-height:14px">Novák...</div>
<div style="position:absolute;left:335px;top:399px;white-space:nowrap;line-height:14px">opra...</div>
<div style="position:absolute;left:377px;width:105px;top:399px;text-align:right;white-space:nowrap;line-height:14px">29.12.2017</div>
<div style="position:absolute;left:487px;width:111px;top:399px;text-align:right;white-space:nowrap;line-height:14px">10 000,00</div>
<div style="position:absolute;left:603px;width:111px;top:399px;text-align:right;white-space:nowrap;line-height:14px">10 000,00</div>
<div style="position:absolute;left:719px;width:90px;top:399px;text-align:right;white-space:nowrap;line-height:14px">1 000,00</div>
<div style="position:absolute;left:820px;top:399px;white-space:nowrap;line-height:14px">Kč</div>
<div style="position:absolute;left:867px;top:396px;width:18px;height:17px;background:#3dbf79;border:1px solid #727272"></div>
<svg style="position:absolute;left:903px;top:397px;" width="11" height="15" viewBox="0 0 11 15"><rect x="0" y="0" width="11" height="15" rx="0.8" fill="#4ac585"/><rect x="1.2" y="1.3" width="8.5" height="2.6" fill="#fcfcfc"/><g fill="#fcfcfc"><rect x="1.9" y="6.4" width="1.5" height="1.5"/><rect x="5.2" y="6.4" width="1.5" height="1.5"/><rect x="8.4" y="6.4" width="1.5" height="1.5"/><rect x="1.9" y="9.4" width="1.5" height="1.5"/><rect x="5.2" y="9.4" width="1.5" height="1.5"/><rect x="8.4" y="9.4" width="1.5" height="4.4"/><rect x="1.9" y="12.4" width="1.5" height="1.5"/><rect x="5.2" y="12.4" width="1.5" height="1.5"/></g></svg>
<div style="position:absolute;left:79px;top:437px;width:843px;height:1px;background:#d5d5d5"></div>
<div style="position:absolute;left:149px;top:421px;white-space:nowrap;line-height:14px">10...</div>
<svg style="position:absolute;left:189px;top:420px;" width="12" height="14" viewBox="0 0 12 14"><path d="M2.4 6 V3.9 A3.1 3.1 0 0 1 8.6 3.9 V6" stroke="#3cbe78" stroke-width="1.4" fill="none"/><rect x="0" y="5.6" width="11" height="7.4" fill="#3cbe78"/></svg>
<svg style="position:absolute;left:232px;top:418px;" width="17" height="18" viewBox="0 0 17 18"><rect x="1.1" y="2.7" width="11" height="13.6" stroke="#1a9fe3" stroke-width="1.2" fill="none"/><rect x="4.3" y="1" width="4.6" height="2.6" rx="0.8" fill="#fcfcfc" stroke="#1a9fe3" stroke-width="1.1"/><path d="M3 7.5 H4.3 M5.3 7.5 H7.5 M3 9 H5.5" stroke="#1a9fe3" stroke-width="0.9"/><circle cx="4.6" cy="12.4" r="1.7" stroke="#1a9fe3" stroke-width="1.1" fill="none"/><rect x="9.1" y="8.2" width="6.9" height="9.2" stroke="#1a9fe3" stroke-width="1.2" fill="#fcfcfc"/><path d="M10.8 10.4 H14.3 M10.8 12.9 H11.9 M13.2 12.9 H14.3 M10.8 15.2 H11.9 M13.2 15.2 H14.3" stroke="#1a9fe3" stroke-width="1"/></svg>
<div style="position:absolute;left:278px;top:421px;white-space:nowrap;line-height:14px">Léčiva...</div>
<div style="position:absolute;left:335px;top:421px;white-space:nowrap;line-height:14px">Přija...</div>
<div style="position:absolute;left:377px;width:105px;top:421px;text-align:right;white-space:nowrap;line-height:14px">06.12.2018</div>
<div style="position:absolute;left:487px;width:111px;top:421px;text-align:right;white-space:nowrap;line-height:14px">10 000,00</div>
<div style="position:absolute;left:603px;width:111px;top:421px;text-align:right;white-space:nowrap;line-height:14px">10 000,00</div>
<div style="position:absolute;left:719px;width:90px;top:421px;text-align:right;white-space:nowrap;line-height:14px">2 000,00</div>
<div style="position:absolute;left:820px;top:421px;white-space:nowrap;line-height:14px">Kč</div>
<div style="position:absolute;left:867px;top:418px;width:18px;height:17px;background:#3dbf79;border:1px solid #727272"></div>
<svg style="position:absolute;left:903px;top:419px;" width="11" height="15" viewBox="0 0 11 15"><rect x="0" y="0" width="11" height="15" rx="0.8" fill="#4ac585"/><rect x="1.2" y="1.3" width="8.5" height="2.6" fill="#fcfcfc"/><g fill="#fcfcfc"><rect x="1.9" y="6.4" width="1.5" height="1.5"/><rect x="5.2" y="6.4" width="1.5" height="1.5"/><rect x="8.4" y="6.4" width="1.5" height="1.5"/><rect x="1.9" y="9.4" width="1.5" height="1.5"/><rect x="5.2" y="9.4" width="1.5" height="1.5"/><rect x="8.4" y="9.4" width="1.5" height="4.4"/><rect x="1.9" y="12.4" width="1.5" height="1.5"/><rect x="5.2" y="12.4" width="1.5" height="1.5"/></g></svg>
<div style="position:absolute;left:79px;top:459px;width:843px;height:1px;background:#d5d5d5"></div>
<div style="position:absolute;left:112px;top:443px;white-space:nowrap;line-height:14px">10...</div>
<div style="position:absolute;left:149px;top:443px;white-space:nowrap;line-height:14px">10...</div>
<svg style="position:absolute;left:189px;top:442px;" width="12" height="14" viewBox="0 0 12 14"><path d="M2.4 6 V3.9 A3.1 3.1 0 0 1 8.6 3.9 V6" stroke="#3cbe78" stroke-width="1.4" fill="none"/><rect x="0" y="5.6" width="11" height="7.4" fill="#3cbe78"/></svg>
<svg style="position:absolute;left:232px;top:440px;" width="17" height="18" viewBox="0 0 17 18"><rect x="1.1" y="2.7" width="11" height="13.6" stroke="#1a9fe3" stroke-width="1.2" fill="none"/><rect x="4.3" y="1" width="4.6" height="2.6" rx="0.8" fill="#fcfcfc" stroke="#1a9fe3" stroke-width="1.1"/><path d="M3 7.5 H4.3 M5.3 7.5 H7.5 M3 9 H5.5" stroke="#1a9fe3" stroke-width="0.9"/><circle cx="4.6" cy="12.4" r="1.7" stroke="#1a9fe3" stroke-width="1.1" fill="none"/><rect x="9.1" y="8.2" width="6.9" height="9.2" stroke="#1a9fe3" stroke-width="1.2" fill="#fcfcfc"/><path d="M10.8 10.4 H14.3 M10.8 12.9 H11.9 M13.2 12.9 H14.3 M10.8 15.2 H11.9 M13.2 15.2 H14.3" stroke="#1a9fe3" stroke-width="1"/></svg>
<div style="position:absolute;left:278px;top:443px;white-space:nowrap;line-height:14px">Potrav...</div>
<div style="position:absolute;left:377px;width:105px;top:443px;text-align:right;white-space:nowrap;line-height:14px">02.01.2019</div>
<div style="position:absolute;left:487px;width:111px;top:443px;text-align:right;white-space:nowrap;line-height:14px">1 000,00</div>
<div style="position:absolute;left:603px;width:111px;top:443px;text-align:right;white-space:nowrap;line-height:14px">1 000,00</div>
<div style="position:absolute;left:719px;width:90px;top:443px;text-align:right;white-space:nowrap;line-height:14px">0,00</div>
<div style="position:absolute;left:820px;top:443px;white-space:nowrap;line-height:14px">Kč</div>
<div style="position:absolute;left:867px;top:440px;width:18px;height:17px;background:#3dbf79;border:1px solid #727272"></div>
<div style="position:absolute;left:79px;top:481px;width:843px;height:1px;background:#d5d5d5"></div>
<div style="position:absolute;left:112px;top:465px;white-space:nowrap;line-height:14px">10...</div>
<div style="position:absolute;left:149px;top:465px;white-space:nowrap;line-height:14px">10...</div>
<svg style="position:absolute;left:189px;top:464px;" width="12" height="14" viewBox="0 0 12 14"><path d="M2.4 6 V3.9 A3.1 3.1 0 0 1 8.6 3.9 V6" stroke="#3cbe78" stroke-width="1.4" fill="none"/><rect x="0" y="5.6" width="11" height="7.4" fill="#3cbe78"/></svg>
<svg style="position:absolute;left:232px;top:462px;" width="17" height="18" viewBox="0 0 17 18"><rect x="1.1" y="2.7" width="11" height="13.6" stroke="#1a9fe3" stroke-width="1.2" fill="none"/><rect x="4.3" y="1" width="4.6" height="2.6" rx="0.8" fill="#fcfcfc" stroke="#1a9fe3" stroke-width="1.1"/><path d="M3 7.5 H4.3 M5.3 7.5 H7.5 M3 9 H5.5" stroke="#1a9fe3" stroke-width="0.9"/><circle cx="4.6" cy="12.4" r="1.7" stroke="#1a9fe3" stroke-width="1.1" fill="none"/><rect x="9.1" y="8.2" width="6.9" height="9.2" stroke="#1a9fe3" stroke-width="1.2" fill="#fcfcfc"/><path d="M10.8 10.4 H14.3 M10.8 12.9 H11.9 M13.2 12.9 H14.3 M10.8 15.2 H11.9 M13.2 15.2 H14.3" stroke="#1a9fe3" stroke-width="1"/></svg>
<div style="position:absolute;left:278px;top:465px;white-space:nowrap;line-height:14px">BRAV...</div>
<div style="position:absolute;left:335px;top:465px;white-space:nowrap;line-height:14px">1. zá...</div>
<div style="position:absolute;left:377px;width:105px;top:465px;text-align:right;white-space:nowrap;line-height:14px">10.01.2019</div>
<div style="position:absolute;left:487px;width:111px;top:465px;text-align:right;white-space:nowrap;line-height:14px">1 000,00</div>
<div style="position:absolute;left:603px;width:111px;top:465px;text-align:right;white-space:nowrap;line-height:14px">1 000,00</div>
<div style="position:absolute;left:719px;width:90px;top:465px;text-align:right;white-space:nowrap;line-height:14px">0,00</div>
<div style="position:absolute;left:820px;top:465px;white-space:nowrap;line-height:14px">Kč</div>
<div style="position:absolute;left:867px;top:462px;width:18px;height:17px;background:#3dbf79;border:1px solid #727272"></div>
<div style="position:absolute;left:79px;top:503px;width:843px;height:1px;background:#d5d5d5"></div>
<div style="position:absolute;left:112px;top:487px;white-space:nowrap;line-height:14px">10...</div>
<div style="position:absolute;left:149px;top:487px;white-space:nowrap;line-height:14px">10...</div>
<svg style="position:absolute;left:189px;top:486px;" width="12" height="14" viewBox="0 0 12 14"><path d="M2.4 6 V3.9 A3.1 3.1 0 0 1 8.6 3.9 V6" stroke="#3cbe78" stroke-width="1.4" fill="none"/><rect x="0" y="5.6" width="11" height="7.4" fill="#3cbe78"/></svg>
<svg style="position:absolute;left:232px;top:484px;" width="17" height="18" viewBox="0 0 17 18"><rect x="1.1" y="2.7" width="11" height="13.6" stroke="#1a9fe3" stroke-width="1.2" fill="none"/><rect x="4.3" y="1" width="4.6" height="2.6" rx="0.8" fill="#fcfcfc" stroke="#1a9fe3" stroke-width="1.1"/><path d="M3 7.5 H4.3 M5.3 7.5 H7.5 M3 9 H5.5" stroke="#1a9fe3" stroke-width="0.9"/><circle cx="4.6" cy="12.4" r="1.7" stroke="#1a9fe3" stroke-width="1.1" fill="none"/><rect x="9.1" y="8.2" width="6.9" height="9.2" stroke="#1a9fe3" stroke-width="1.2" fill="#fcfcfc"/><path d="M10.8 10.4 H14.3 M10.8 12.9 H11.9 M13.2 12.9 H14.3 M10.8 15.2 H11.9 M13.2 15.2 H14.3" stroke="#1a9fe3" stroke-width="1"/></svg>
<div style="position:absolute;left:278px;top:487px;white-space:nowrap;line-height:14px">BRAV...</div>
<div style="position:absolute;left:377px;width:105px;top:487px;text-align:right;white-space:nowrap;line-height:14px">10.01.2019</div>
<div style="position:absolute;left:487px;width:111px;top:487px;text-align:right;white-space:nowrap;line-height:14px">1 000,00</div>
<div style="position:absolute;left:603px;width:111px;top:487px;text-align:right;white-space:nowrap;line-height:14px">1 000,00</div>
<div style="position:absolute;left:719px;width:90px;top:487px;text-align:right;white-space:nowrap;line-height:14px">0,00</div>
<div style="position:absolute;left:820px;top:487px;white-space:nowrap;line-height:14px">Kč</div>
<div style="position:absolute;left:867px;top:484px;width:18px;height:17px;background:#3dbf79;border:1px solid #727272"></div>
<div style="position:absolute;left:79px;top:525px;width:843px;height:1px;background:#d5d5d5"></div>
<div style="position:absolute;left:112px;top:509px;white-space:nowrap;line-height:14px">10...</div>
<div style="position:absolute;left:149px;top:509px;white-space:nowrap;line-height:14px">10...</div>
<svg style="position:absolute;left:189px;top:508px;" width="12" height="14" viewBox="0 0 12 14"><path d="M2.4 6 V3.9 A3.1 3.1 0 0 1 8.6 3.9 V6" stroke="#3cbe78" stroke-width="1.4" fill="none"/><rect x="0" y="5.6" width="11" height="7.4" fill="#3cbe78"/></svg>
<svg style="position:absolute;left:232px;top:506px;" width="17" height="18" viewBox="0 0 17 18"><rect x="1.1" y="2.7" width="11" height="13.6" stroke="#1a9fe3" stroke-width="1.2" fill="none"/><rect x="4.3" y="1" width="4.6" height="2.6" rx="0.8" fill="#fcfcfc" stroke="#1a9fe3" stroke-width="1.1"/><path d="M3 7.5 H4.3 M5.3 7.5 H7.5 M3 9 H5.5" stroke="#1a9fe3" stroke-width="0.9"/><circle cx="4.6" cy="12.4" r="1.7" stroke="#1a9fe3" stroke-width="1.1" fill="none"/><rect x="9.1" y="8.2" width="6.9" height="9.2" stroke="#1a9fe3" stroke-width="1.2" fill="#fcfcfc"/><path d="M10.8 10.4 H14.3 M10.8 12.9 H11.9 M13.2 12.9 H14.3 M10.8 15.2 H11.9 M13.2 15.2 H14.3" stroke="#1a9fe3" stroke-width="1"/></svg>
<div style="position:absolute;left:278px;top:509px;white-space:nowrap;line-height:14px">BRAV...</div>
<div style="position:absolute;left:377px;width:105px;top:509px;text-align:right;white-space:nowrap;line-height:14px">10.01.2019</div>
<div style="position:absolute;left:487px;width:111px;top:509px;text-align:right;white-space:nowrap;line-height:14px">1 000,00</div>
<div style="position:absolute;left:603px;width:111px;top:509px;text-align:right;white-space:nowrap;line-height:14px">1 000,00</div>
<div style="position:absolute;left:719px;width:90px;top:509px;text-align:right;white-space:nowrap;line-height:14px">0,00</div>
<div style="position:absolute;left:820px;top:509px;white-space:nowrap;line-height:14px">Kč</div>
<div style="position:absolute;left:867px;top:506px;width:18px;height:17px;background:#3dbf79;border:1px solid #727272"></div>
<div style="position:absolute;left:79px;top:547px;width:843px;height:1px;background:#d5d5d5"></div>
<div style="position:absolute;left:112px;top:531px;white-space:nowrap;line-height:14px">10...</div>
<div style="position:absolute;left:149px;top:531px;white-space:nowrap;line-height:14px">10...</div>
<svg style="position:absolute;left:189px;top:530px;" width="12" height="14" viewBox="0 0 12 14"><path d="M2.4 6 V3.9 A3.1 3.1 0 0 1 8.6 3.9 V6" stroke="#3cbe78" stroke-width="1.4" fill="none"/><rect x="0" y="5.6" width="11" height="7.4" fill="#3cbe78"/></svg>
<svg style="position:absolute;left:232px;top:528px;" width="17" height="18" viewBox="0 0 17 18"><rect x="1.1" y="2.7" width="11" height="13.6" stroke="#1a9fe3" stroke-width="1.2" fill="none"/><rect x="4.3" y="1" width="4.6" height="2.6" rx="0.8" fill="#fcfcfc" stroke="#1a9fe3" stroke-width="1.1"/><path d="M3 7.5 H4.3 M5.3 7.5 H7.5 M3 9 H5.5" stroke="#1a9fe3" stroke-width="0.9"/><circle cx="4.6" cy="12.4" r="1.7" stroke="#1a9fe3" stroke-width="1.1" fill="none"/><rect x="9.1" y="8.2" width="6.9" height="9.2" stroke="#1a9fe3" stroke-width="1.2" fill="#fcfcfc"/><path d="M10.8 10.4 H14.3 M10.8 12.9 H11.9 M13.2 12.9 H14.3 M10.8 15.2 H11.9 M13.2 15.2 H14.3" stroke="#1a9fe3" stroke-width="1"/></svg>
<div style="position:absolute;left:278px;top:531px;white-space:nowrap;line-height:14px">BRAV...</div>
<div style="position:absolute;left:335px;top:531px;white-space:nowrap;line-height:14px">tepl...</div>
<div style="position:absolute;left:377px;width:105px;top:531px;text-align:right;white-space:nowrap;line-height:14px">10.01.2019</div>
<div style="position:absolute;left:487px;width:111px;top:531px;text-align:right;white-space:nowrap;line-height:14px">1 000,00</div>
<div style="position:absolute;left:603px;width:111px;top:531px;text-align:right;white-space:nowrap;line-height:14px">1 000,00</div>
<div style="position:absolute;left:719px;width:90px;top:531px;text-align:right;white-space:nowrap;line-height:14px">0,00</div>
<div style="position:absolute;left:820px;top:531px;white-space:nowrap;line-height:14px">Kč</div>
<div style="position:absolute;left:867px;top:528px;width:18px;height:17px;background:#3dbf79;border:1px solid #727272"></div>
<div style="position:absolute;left:79px;top:569px;width:843px;height:1px;background:#d5d5d5"></div>
<div style="position:absolute;left:112px;top:553px;white-space:nowrap;line-height:14px">10...</div>
<div style="position:absolute;left:149px;top:553px;white-space:nowrap;line-height:14px">10...</div>
<svg style="position:absolute;left:189px;top:552px;" width="12" height="14" viewBox="0 0 12 14"><path d="M2.4 6 V3.9 A3.1 3.1 0 0 1 8.6 3.9 V6" stroke="#3cbe78" stroke-width="1.4" fill="none"/><rect x="0" y="5.6" width="11" height="7.4" fill="#3cbe78"/></svg>
<svg style="position:absolute;left:232px;top:550px;" width="17" height="18" viewBox="0 0 17 18"><rect x="1.1" y="2.7" width="11" height="13.6" stroke="#1a9fe3" stroke-width="1.2" fill="none"/><rect x="4.3" y="1" width="4.6" height="2.6" rx="0.8" fill="#fcfcfc" stroke="#1a9fe3" stroke-width="1.1"/><path d="M3 7.5 H4.3 M5.3 7.5 H7.5 M3 9 H5.5" stroke="#1a9fe3" stroke-width="0.9"/><circle cx="4.6" cy="12.4" r="1.7" stroke="#1a9fe3" stroke-width="1.1" fill="none"/><rect x="9.1" y="8.2" width="6.9" height="9.2" stroke="#1a9fe3" stroke-width="1.2" fill="#fcfcfc"/><path d="M10.8 10.4 H14.3 M10.8 12.9 H11.9 M13.2 12.9 H14.3 M10.8 15.2 H11.9 M13.2 15.2 H14.3" stroke="#1a9fe3" stroke-width="1"/></svg>
<div style="position:absolute;left:278px;top:553px;white-space:nowrap;line-height:14px">BRAV...</div>
<div style="position:absolute;left:335px;top:553px;white-space:nowrap;line-height:14px">tepl...</div>
<div style="position:absolute;left:377px;width:105px;top:553px;text-align:right;white-space:nowrap;line-height:14px">10.01.2019</div>
<div style="position:absolute;left:487px;width:111px;top:553px;text-align:right;white-space:nowrap;line-height:14px">1 000,00</div>
<div style="position:absolute;left:603px;width:111px;top:553px;text-align:right;white-space:nowrap;line-height:14px">1 000,00</div>
<div style="position:absolute;left:719px;width:90px;top:553px;text-align:right;white-space:nowrap;line-height:14px">0,00</div>
<div style="position:absolute;left:820px;top:553px;white-space:nowrap;line-height:14px">Kč</div>
<div style="position:absolute;left:867px;top:550px;width:18px;height:17px;background:#3dbf79;border:1px solid #727272"></div>
<div style="position:absolute;left:79px;top:591px;width:843px;height:1px;background:#d5d5d5"></div>
<div style="position:absolute;left:112px;top:575px;white-space:nowrap;line-height:14px">10...</div>
<div style="position:absolute;left:149px;top:575px;white-space:nowrap;line-height:14px">10...</div>
<svg style="position:absolute;left:189px;top:574px;" width="12" height="14" viewBox="0 0 12 14"><path d="M2.4 6 V3.9 A3.1 3.1 0 0 1 8.6 3.9 V6" stroke="#3cbe78" stroke-width="1.4" fill="none"/><rect x="0" y="5.6" width="11" height="7.4" fill="#3cbe78"/></svg>
<svg style="position:absolute;left:232px;top:572px;" width="17" height="18" viewBox="0 0 17 18"><rect x="1.1" y="2.7" width="11" height="13.6" stroke="#1a9fe3" stroke-width="1.2" fill="none"/><rect x="4.3" y="1" width="4.6" height="2.6" rx="0.8" fill="#fcfcfc" stroke="#1a9fe3" stroke-width="1.1"/><path d="M3 7.5 H4.3 M5.3 7.5 H7.5 M3 9 H5.5" stroke="#1a9fe3" stroke-width="0.9"/><circle cx="4.6" cy="12.4" r="1.7" stroke="#1a9fe3" stroke-width="1.1" fill="none"/><rect x="9.1" y="8.2" width="6.9" height="9.2" stroke="#1a9fe3" stroke-width="1.2" fill="#fcfcfc"/><path d="M10.8 10.4 H14.3 M10.8 12.9 H11.9 M13.2 12.9 H14.3 M10.8 15.2 H11.9 M13.2 15.2 H14.3" stroke="#1a9fe3" stroke-width="1"/></svg>
<div style="position:absolute;left:278px;top:575px;white-space:nowrap;line-height:14px">BRAV...</div>
<div style="position:absolute;left:377px;width:105px;top:575px;text-align:right;white-space:nowrap;line-height:14px">10.01.2019</div>
<div style="position:absolute;left:487px;width:111px;top:575px;text-align:right;white-space:nowrap;line-height:14px">1 000,00</div>
<div style="position:absolute;left:603px;width:111px;top:575px;text-align:right;white-space:nowrap;line-height:14px">1 000,00</div>
<div style="position:absolute;left:719px;width:90px;top:575px;text-align:right;white-space:nowrap;line-height:14px">0,00</div>
<div style="position:absolute;left:820px;top:575px;white-space:nowrap;line-height:14px">Kč</div>
<div style="position:absolute;left:867px;top:572px;width:18px;height:17px;background:#3dbf79;border:1px solid #727272"></div>
<div style="position:absolute;left:79px;top:613px;width:843px;height:1px;background:#d5d5d5"></div>
<div style="position:absolute;left:149px;top:597px;white-space:nowrap;line-height:14px">10...</div>
<svg style="position:absolute;left:189px;top:596px;" width="12" height="14" viewBox="0 0 12 14"><path d="M2.4 6 V3.9 A3.1 3.1 0 0 1 8.6 3.9 V6" stroke="#3cbe78" stroke-width="1.4" fill="none"/><rect x="0" y="5.6" width="11" height="7.4" fill="#3cbe78"/></svg>
<div style="position:absolute;left:278px;top:597px;white-space:nowrap;line-height:14px">Firma...</div>
<div style="position:absolute;left:377px;width:105px;top:597px;text-align:right;white-space:nowrap;line-height:14px">01.12.2020</div>
<div style="position:absolute;left:487px;width:111px;top:597px;text-align:right;white-space:nowrap;line-height:14px">15 000,00</div>
<div style="position:absolute;left:603px;width:111px;top:597px;text-align:right;white-space:nowrap;line-height:14px">12 000,00</div>
<div style="position:absolute;left:719px;width:90px;top:597px;text-align:right;white-space:nowrap;line-height:14px">0,00</div>
<div style="position:absolute;left:820px;top:597px;white-space:nowrap;line-height:14px">Kč</div>
<div style="position:absolute;left:867px;top:594px;width:18px;height:17px;background:#fcfcfc;border:1px solid #777"><div style="position:absolute;left:8px;top:2px;width:8px;height:13px;background:#3dbf79"></div><div style="position:absolute;left:0;top:12px;width:8px;height:3px;background:#f05252"></div></div>
<div style="position:absolute;left:79px;top:635px;width:843px;height:1px;background:#d5d5d5"></div>
<div style="position:absolute;left:112px;top:619px;white-space:nowrap;line-height:14px">10...</div>
<div style="position:absolute;left:149px;top:619px;white-space:nowrap;line-height:14px">10...</div>
<svg style="position:absolute;left:189px;top:618px;" width="12" height="14" viewBox="0 0 12 14"><path d="M2.4 6 V3.9 A3.1 3.1 0 0 1 8.6 3.9 V6" stroke="#3cbe78" stroke-width="1.4" fill="none"/><rect x="0" y="5.6" width="11" height="7.4" fill="#3cbe78"/></svg>
<svg style="position:absolute;left:232px;top:616px;" width="17" height="18" viewBox="0 0 17 18"><rect x="1.1" y="2.7" width="11" height="13.6" stroke="#1a9fe3" stroke-width="1.2" fill="none"/><rect x="4.3" y="1" width="4.6" height="2.6" rx="0.8" fill="#fcfcfc" stroke="#1a9fe3" stroke-width="1.1"/><path d="M3 7.5 H4.3 M5.3 7.5 H7.5 M3 9 H5.5" stroke="#1a9fe3" stroke-width="0.9"/><circle cx="4.6" cy="12.4" r="1.7" stroke="#1a9fe3" stroke-width="1.1" fill="none"/><rect x="9.1" y="8.2" width="6.9" height="9.2" stroke="#1a9fe3" stroke-width="1.2" fill="#fcfcfc"/><path d="M10.8 10.4 H14.3 M10.8 12.9 H11.9 M13.2 12.9 H14.3 M10.8 15.2 H11.9 M13.2 15.2 H14.3" stroke="#1a9fe3" stroke-width="1"/></svg>
<div style="position:absolute;left:278px;top:619px;white-space:nowrap;line-height:14px">Firma...</div>
<div style="position:absolute;left:377px;width:105px;top:619px;text-align:right;white-space:nowrap;line-height:14px">01.03.2021</div>
<div style="position:absolute;left:487px;width:111px;top:619px;text-align:right;white-space:nowrap;line-height:14px">2 000,00</div>
<div style="position:absolute;left:603px;width:111px;top:619px;text-align:right;white-space:nowrap;line-height:14px">2 000,00</div>
<div style="position:absolute;left:719px;width:90px;top:619px;text-align:right;white-space:nowrap;line-height:14px">0,00</div>
<div style="position:absolute;left:820px;top:619px;white-space:nowrap;line-height:14px">Kč</div>
<div style="position:absolute;left:867px;top:616px;width:18px;height:17px;background:#3dbf79;border:1px solid #727272"></div>
<div style="position:absolute;left:79px;top:657px;width:843px;height:1px;background:#d5d5d5"></div>
<div style="position:absolute;left:112px;top:641px;white-space:nowrap;line-height:14px">10...</div>
<div style="position:absolute;left:149px;top:641px;white-space:nowrap;line-height:14px">10...</div>
<svg style="position:absolute;left:189px;top:640px;" width="12" height="14" viewBox="0 0 12 14"><path d="M2.4 6 V3.9 A3.1 3.1 0 0 1 8.6 3.9 V6" stroke="#3cbe78" stroke-width="1.4" fill="none"/><rect x="0" y="5.6" width="11" height="7.4" fill="#3cbe78"/></svg>
<svg style="position:absolute;left:232px;top:638px;" width="17" height="18" viewBox="0 0 17 18"><rect x="1.1" y="2.7" width="11" height="13.6" stroke="#1a9fe3" stroke-width="1.2" fill="none"/><rect x="4.3" y="1" width="4.6" height="2.6" rx="0.8" fill="#fcfcfc" stroke="#1a9fe3" stroke-width="1.1"/><path d="M3 7.5 H4.3 M5.3 7.5 H7.5 M3 9 H5.5" stroke="#1a9fe3" stroke-width="0.9"/><circle cx="4.6" cy="12.4" r="1.7" stroke="#1a9fe3" stroke-width="1.1" fill="none"/><rect x="9.1" y="8.2" width="6.9" height="9.2" stroke="#1a9fe3" stroke-width="1.2" fill="#fcfcfc"/><path d="M10.8 10.4 H14.3 M10.8 12.9 H11.9 M13.2 12.9 H14.3 M10.8 15.2 H11.9 M13.2 15.2 H14.3" stroke="#1a9fe3" stroke-width="1"/></svg>
<div style="position:absolute;left:278px;top:641px;white-space:nowrap;line-height:14px">OME...</div>
<div style="position:absolute;left:377px;width:105px;top:641px;text-align:right;white-space:nowrap;line-height:14px">01.06.2021</div>
<div style="position:absolute;left:487px;width:111px;top:641px;text-align:right;white-space:nowrap;line-height:14px">6 857,50</div>
<div style="position:absolute;left:603px;width:111px;top:641px;text-align:right;white-space:nowrap;line-height:14px">6 857,50</div>
<div style="position:absolute;left:719px;width:90px;top:641px;text-align:right;white-space:nowrap;line-height:14px">0,00</div>
<div style="position:absolute;left:820px;top:641px;white-space:nowrap;line-height:14px">Kč</div>
<div style="position:absolute;left:867px;top:638px;width:18px;height:17px;background:#3dbf79;border:1px solid #727272"></div>
<div style="position:absolute;left:79px;top:679px;width:843px;height:1px;background:#d5d5d5"></div>
<div style="position:absolute;left:112px;top:663px;white-space:nowrap;line-height:14px">10...</div>
<div style="position:absolute;left:149px;top:663px;white-space:nowrap;line-height:14px">10...</div>
<svg style="position:absolute;left:189px;top:662px;" width="12" height="14" viewBox="0 0 12 14"><path d="M2.4 6 V3.9 A3.1 3.1 0 0 1 8.6 3.9 V6" stroke="#3cbe78" stroke-width="1.4" fill="none"/><rect x="0" y="5.6" width="11" height="7.4" fill="#3cbe78"/></svg>
<svg style="position:absolute;left:232px;top:660px;" width="17" height="18" viewBox="0 0 17 18"><rect x="1.1" y="2.7" width="11" height="13.6" stroke="#1a9fe3" stroke-width="1.2" fill="none"/><rect x="4.3" y="1" width="4.6" height="2.6" rx="0.8" fill="#fcfcfc" stroke="#1a9fe3" stroke-width="1.1"/><path d="M3 7.5 H4.3 M5.3 7.5 H7.5 M3 9 H5.5" stroke="#1a9fe3" stroke-width="0.9"/><circle cx="4.6" cy="12.4" r="1.7" stroke="#1a9fe3" stroke-width="1.1" fill="none"/><rect x="9.1" y="8.2" width="6.9" height="9.2" stroke="#1a9fe3" stroke-width="1.2" fill="#fcfcfc"/><path d="M10.8 10.4 H14.3 M10.8 12.9 H11.9 M13.2 12.9 H14.3 M10.8 15.2 H11.9 M13.2 15.2 H14.3" stroke="#1a9fe3" stroke-width="1"/></svg>
<div style="position:absolute;left:278px;top:663px;white-space:nowrap;line-height:14px">Léčiva...</div>
<div style="position:absolute;left:377px;width:105px;top:663px;text-align:right;white-space:nowrap;line-height:14px">21.06.2021</div>
<div style="position:absolute;left:487px;width:111px;top:663px;text-align:right;white-space:nowrap;line-height:14px">309 276,00</div>
<div style="position:absolute;left:603px;width:111px;top:663px;text-align:right;white-space:nowrap;line-height:14px">309 276,00</div>
<div style="position:absolute;left:719px;width:90px;top:663px;text-align:right;white-space:nowrap;line-height:14px">309 276,00</div>
<div style="position:absolute;left:820px;top:663px;white-space:nowrap;line-height:14px">Kč</div>
<div style="position:absolute;left:867px;top:660px;width:18px;height:17px;background:#3dbf79;border:1px solid #727272"></div>
<svg style="position:absolute;left:903px;top:661px;" width="11" height="15" viewBox="0 0 11 15"><rect x="0" y="0" width="11" height="15" rx="0.8" fill="#4ac585"/><rect x="1.2" y="1.3" width="8.5" height="2.6" fill="#fcfcfc"/><g fill="#fcfcfc"><rect x="1.9" y="6.4" width="1.5" height="1.5"/><rect x="5.2" y="6.4" width="1.5" height="1.5"/><rect x="8.4" y="6.4" width="1.5" height="1.5"/><rect x="1.9" y="9.4" width="1.5" height="1.5"/><rect x="5.2" y="9.4" width="1.5" height="1.5"/><rect x="8.4" y="9.4" width="1.5" height="4.4"/><rect x="1.9" y="12.4" width="1.5" height="1.5"/><rect x="5.2" y="12.4" width="1.5" height="1.5"/></g></svg>
<div style="position:absolute;left:79px;top:680px;width:843px;height:21px;background:#cbeaf8"></div>
<div style="position:absolute;left:79px;top:680px;width:27px;height:21px;background:#afe3f8;border:1px dotted #000"></div>
<div style="position:absolute;left:79px;top:701px;width:843px;height:1px;background:#d5d5d5"></div>
<div style="position:absolute;left:112px;top:685px;white-space:nowrap;line-height:14px">10...</div>
<div style="position:absolute;left:149px;top:685px;white-space:nowrap;line-height:14px">10...</div>
<svg style="position:absolute;left:189px;top:684px;" width="12" height="14" viewBox="0 0 12 14"><path d="M2.4 6 V3.9 A3.1 3.1 0 0 1 8.6 3.9 V6" stroke="#3cbe78" stroke-width="1.4" fill="none"/><rect x="0" y="5.6" width="11" height="7.4" fill="#3cbe78"/></svg>
<svg style="position:absolute;left:232px;top:682px;" width="17" height="18" viewBox="0 0 17 18"><rect x="1.1" y="2.7" width="11" height="13.6" stroke="#1a9fe3" stroke-width="1.2" fill="none"/><rect x="4.3" y="1" width="4.6" height="2.6" rx="0.8" fill="#fcfcfc" stroke="#1a9fe3" stroke-width="1.1"/><path d="M3 7.5 H4.3 M5.3 7.5 H7.5 M3 9 H5.5" stroke="#1a9fe3" stroke-width="0.9"/><circle cx="4.6" cy="12.4" r="1.7" stroke="#1a9fe3" stroke-width="1.1" fill="none"/><rect x="9.1" y="8.2" width="6.9" height="9.2" stroke="#1a9fe3" stroke-width="1.2" fill="#fcfcfc"/><path d="M10.8 10.4 H14.3 M10.8 12.9 H11.9 M13.2 12.9 H14.3 M10.8 15.2 H11.9 M13.2 15.2 H14.3" stroke="#1a9fe3" stroke-width="1"/></svg>
<div style="position:absolute;left:278px;top:685px;white-space:nowrap;line-height:14px">Léčiva...</div>
<div style="position:absolute;left:377px;width:105px;top:685px;text-align:right;white-space:nowrap;line-height:14px">21.06.2021</div>
<div style="position:absolute;left:487px;width:111px;top:685px;text-align:right;white-space:nowrap;line-height:14px">273 460,00</div>
<div style="position:absolute;left:603px;width:111px;top:685px;text-align:right;white-space:nowrap;line-height:14px">273 460,00</div>
<div style="position:absolute;left:719px;width:90px;top:685px;text-align:right;white-space:nowrap;line-height:14px">273 460,00</div>
<div style="position:absolute;left:820px;top:685px;white-space:nowrap;line-height:14px">Kč</div>
<div style="position:absolute;left:867px;top:682px;width:18px;height:17px;background:#3dbf79;border:1px solid #727272"></div>
<div style="position:absolute;left:106px;top:218px;width:1px;height:484px;background:#d5d5d5"></div>
<div style="position:absolute;left:143px;top:218px;width:1px;height:484px;background:#d5d5d5"></div>
<div style="position:absolute;left:180px;top:218px;width:1px;height:484px;background:#d5d5d5"></div>
<div style="position:absolute;left:208px;top:218px;width:1px;height:484px;background:#d5d5d5"></div>
<div style="position:absolute;left:272px;top:218px;width:1px;height:484px;background:#d5d5d5"></div>
<div style="position:absolute;left:329px;top:218px;width:1px;height:484px;background:#d5d5d5"></div>
<div style="position:absolute;left:377px;top:218px;width:1px;height:484px;background:#d5d5d5"></div>
<div style="position:absolute;left:487px;top:218px;width:1px;height:484px;background:#d5d5d5"></div>
<div style="position:absolute;left:603px;top:218px;width:1px;height:484px;background:#d5d5d5"></div>
<div style="position:absolute;left:719px;top:218px;width:1px;height:484px;background:#d5d5d5"></div>
<div style="position:absolute;left:814px;top:218px;width:1px;height:484px;background:#d5d5d5"></div>
<div style="position:absolute;left:857px;top:218px;width:1px;height:484px;background:#d5d5d5"></div>
<div style="position:absolute;left:894px;top:218px;width:1px;height:484px;background:#d5d5d5"></div>
<div style="position:absolute;left:922px;top:218px;width:1px;height:484px;background:#d5d5d5"></div>
<div style="position:absolute;left:78px;top:723px;width:865px;height:1px;background:#cfcfcf"></div>
<div style="position:absolute;left:78px;top:724px;width:865px;height:25px;background:#f0f0f0;border-left:1px solid #cfcfcf;border-bottom:1px solid #cfcfcf;border-right:1px solid #cfcfcf"></div>
<div style="position:absolute;left:79px;top:725px;width:23px;height:23px;background:#c6c6c6;border:2px solid #6f6f6f"></div>
<svg style="position:absolute;left:82px;top:729px;" width="17" height="15" viewBox="0 0 17 15"><path d="M8.5 3 Q5 1 1.5 2 L1.5 13 Q5 12 8.5 13.5 Q12 12 15.5 13 L15.5 2 Q12 1 8.5 3 Z M8.5 3 L8.5 13.5" stroke="#1f5cae" stroke-width="1.3" fill="none"/></svg>
<svg style="position:absolute;left:108px;top:729px;" width="14" height="15" viewBox="0 0 14 15"><rect x="1" y="1" width="12" height="4" rx="1" stroke="#1f5cae" stroke-width="1.2" fill="none"/><rect x="1.5" y="5" width="11" height="9" stroke="#1f5cae" stroke-width="1.2" fill="none"/><path d="M5.5 7.5 H8.5" stroke="#1f5cae" stroke-width="1.2"/></svg>
<div style="position:absolute;left:127px;top:725px;width:22px;height:23px;background:#dedede"></div>
<svg style="position:absolute;left:130px;top:729px;" width="20" height="17" viewBox="0 0 20 17"><path d="M1 1.5 H13 L8 8 V14 L6 15 V8 Z" stroke="#1f5cae" stroke-width="1.3" fill="none"/><path d="M13 14 H18 L15.5 16.5 Z" fill="#1f5cae"/></svg>
<div style="position:absolute;left:891px;top:727px;width:1px;height:20px;background:#cfcfcf"></div>
<div style="position:absolute;left:916px;top:727px;width:1px;height:20px;background:#cfcfcf"></div>
<svg style="position:absolute;left:896px;top:729px;" width="15" height="15" viewBox="0 0 15 15"><path d="M13 1.5 H1.5 L7.5 7.5 L1.5 13.5 H13" stroke="#1f5cae" stroke-width="1.4" fill="none"/></svg>
<svg style="position:absolute;left:922px;top:729px;" width="16" height="16" viewBox="0 0 16 16"><path d="M1.5 13.5 L2.5 10 L10.5 2 Q11.5 1 12.5 2 L13.5 3 Q14.5 4 13.5 5 L5.5 13 Z" stroke="#1f5cae" stroke-width="1.2" fill="none"/><path d="M7 14.5 H15" stroke="#1f5cae" stroke-width="1.4"/></svg>
<div style="position:absolute;left:181px;top:730px;white-space:nowrap;font-size:12px;line-height:14px;color:#1f5cae">0</div>
<div style="position:absolute;left:194px;top:727px;width:1px;height:20px;background:#cfcfcf"></div>
<div style="position:absolute;left:201px;top:730px;white-space:nowrap;font-size:12px;line-height:14px;color:#1f5cae">Počet záznamů</div>
<div style="position:absolute;left:288px;top:727px;width:1px;height:20px;background:#cfcfcf"></div>
<svg style="position:absolute;left:155px;top:728px;" width="18" height="16" viewBox="0 0 18 16"><path d="M9 15 V5 M4 9 L9 4 L14 9 M1 7 L9 1 L17 7" stroke="#1aa0c0" stroke-width="1.4" fill="none"/></svg>
<div style="position:absolute;left:953px;top:34px;width:7px;height:723px;background:#00adef"></div>
<div style="position:absolute;left:955px;top:383px;width:4px;height:4px;border-radius:2px;background:#4cc6f4"></div>
<div style="position:absolute;left:955px;top:392px;width:4px;height:4px;border-radius:2px;background:#4cc6f4"></div>
<div style="position:absolute;left:955px;top:401px;width:4px;height:4px;border-radius:2px;background:#4cc6f4"></div>
<div style="position:absolute;left:963px;top:34px;width:236px;height:723px;background:#0053a5"></div>
<div style="position:absolute;left:970px;top:46px;white-space:nowrap;font-size:20px;line-height:23px;color:#fff;letter-spacing:-0.4px">Přijatá záloha 10/202...</div>
<svg style="position:absolute;left:1176px;top:47px;" width="15" height="15" viewBox="0 0 15 15"><path d="M5 6.6 H1.4 V13.6 H9.6 V10" stroke="#fff" stroke-width="1.4" fill="none"/><path d="M5.3 1.4 H13.6 V9.6" stroke="#fff" stroke-width="1.4" fill="none"/><path d="M5.2 9.8 L11.2 3.8 M7.6 3.6 H11.4 V7.4" stroke="#fff" stroke-width="1.3" fill="none"/></svg>
<div style="position:absolute;left:966px;top:79px;width:230px;height:25px;background:#00adef"></div>
<div style="position:absolute;left:970px;top:85px;white-space:nowrap;font-size:13px;line-height:15px;color:#fff;font-weight:bold">Základní údaje</div>
<div style="position:absolute;left:1171px;top:81px;width:1px;height:21px;background:#0a93cc"></div>
<svg style="position:absolute;left:1176px;top:86px;" width="15" height="10" viewBox="0 0 15 10"><path d="M1 8.5 L7.5 2 L14 8.5" stroke="#fff" stroke-width="1.4" fill="none"/></svg>
<div style="position:absolute;left:966px;top:104px;width:230px;height:299px;background:#fcfcfc"></div>
<div style="position:absolute;left:973px;top:111px;white-space:nowrap;font-size:12px;line-height:14px;color:#1d4aa6">Zakázka:</div>
<div style="position:absolute;right:16px;top:111px;white-space:nowrap;font-size:12px;line-height:14px;color:#000;letter-spacing:-0.6px">10/2021/22</div>
<div style="position:absolute;left:973px;top:125px;width:216px;height:1px;background:#e6e6e6"></div>
<div style="position:absolute;left:973px;top:133px;white-space:nowrap;font-size:12px;line-height:14px;color:#1d4aa6">Odběratel:</div>
<div style="position:absolute;left:973px;top:147px;width:216px;height:1px;background:#e6e6e6"></div>
<div style="position:absolute;left:973px;top:155px;white-space:nowrap;font-size:12px;line-height:14px;color:#1d4aa6">Popis:</div>
<div style="position:absolute;left:973px;top:169px;width:216px;height:1px;background:#e6e6e6"></div>
<div style="position:absolute;left:973px;top:177px;white-space:nowrap;font-size:12px;line-height:14px;color:#1d4aa6">Netto:</div>
<div style="position:absolute;right:16px;top:177px;white-space:nowrap;font-size:12px;line-height:14px;color:#000;letter-spacing:-0.6px">226 000,00 <span style="color:#1f4e9b">Kč</span></div>
<div style="position:absolute;left:973px;top:191px;width:216px;height:1px;background:#e6e6e6"></div>
<div style="position:absolute;left:973px;top:199px;white-space:nowrap;font-size:12px;line-height:14px;color:#1d4aa6">DPH:</div>
<div style="position:absolute;right:16px;top:199px;white-space:nowrap;font-size:12px;line-height:14px;color:#000;letter-spacing:-0.6px">47 460,00 <span style="color:#1f4e9b">Kč</span></div>
<div style="position:absolute;left:973px;top:213px;width:216px;height:1px;background:#e6e6e6"></div>
<div style="position:absolute;left:973px;top:221px;white-space:nowrap;font-size:12px;line-height:14px;color:#1d4aa6;font-weight:bold">Brutto:</div>
<div style="position:absolute;right:16px;top:221px;white-space:nowrap;font-size:12px;line-height:14px;color:#000;font-weight:bold">273 460,00 <span style="color:#1f4e9b">Kč</span></div>
<div style="position:absolute;left:973px;top:235px;width:216px;height:1px;background:#e6e6e6"></div>
<div style="position:absolute;left:973px;top:243px;white-space:nowrap;font-size:12px;line-height:14px;color:#1d4aa6">Datum účetního případu:</div>
<div style="position:absolute;right:16px;top:243px;white-space:nowrap;font-size:12px;line-height:14px;color:#000;letter-spacing:-0.6px">21.06.2021</div>
<div style="position:absolute;left:973px;top:257px;width:216px;height:1px;background:#e6e6e6"></div>
<div style="position:absolute;left:973px;top:265px;white-space:nowrap;font-size:12px;line-height:14px;color:#1d4aa6">Datum UZP:</div>
<div style="position:absolute;right:16px;top:265px;white-space:nowrap;font-size:12px;line-height:14px;color:#000;letter-spacing:-0.6px">21.06.2021</div>
<div style="position:absolute;left:973px;top:279px;width:216px;height:1px;background:#e6e6e6"></div>
<div style="position:absolute;left:973px;top:287px;white-space:nowrap;font-size:12px;line-height:14px;color:#1d4aa6">Datum splatnosti:</div>
<div style="position:absolute;right:16px;top:287px;white-space:nowrap;font-size:12px;line-height:14px;color:#000;letter-spacing:-0.6px">05.07.2021</div>
<div style="position:absolute;left:973px;top:301px;width:216px;height:1px;background:#e6e6e6"></div>
<div style="position:absolute;left:973px;top:309px;white-space:nowrap;font-size:12px;line-height:14px;color:#1d4aa6">Datum zaplacení:</div>
<div style="position:absolute;right:16px;top:309px;white-space:nowrap;font-size:12px;line-height:14px;color:#000;letter-spacing:-0.6px">21.06.2021</div>
<div style="position:absolute;left:973px;top:323px;width:216px;height:1px;background:#e6e6e6"></div>
<div style="position:absolute;left:973px;top:331px;white-space:nowrap;font-size:12px;line-height:14px;color:#1d4aa6">Zbývá zaplatit:</div>
<div style="position:absolute;right:16px;top:331px;white-space:nowrap;font-size:12px;line-height:14px;color:#000;letter-spacing:-0.6px">0,00 <span style="color:#1f4e9b">Kč</span></div>
<div style="position:absolute;left:973px;top:345px;width:216px;height:1px;background:#e6e6e6"></div>
<div style="position:absolute;left:973px;top:353px;white-space:nowrap;font-size:12px;line-height:14px;color:#1d4aa6">Zbývá dočerpat:</div>
<div style="position:absolute;right:16px;top:353px;white-space:nowrap;font-size:12px;line-height:14px;color:#000;font-weight:bold">273 460,00 <span style="color:#1f4e9b">Kč</span></div>
<div style="position:absolute;left:973px;top:367px;width:216px;height:1px;background:#e6e6e6"></div>
<div style="position:absolute;left:1031px;top:133px;white-space:nowrap;font-size:12px;line-height:14px;color:#000;letter-spacing:-0.3px">Léčiva, a.s.; Nádražní; Ostrav...</div>
<div style="position:absolute;left:973px;top:379px;white-space:nowrap;font-size:12px;line-height:14px;color:#000;font-weight:bold">Daňový doklad</div>
<svg style="position:absolute;left:1089px;top:374px;" width="22" height="23" viewBox="0 0 22 23"><path d="M4 3.5 L1.2 3.5 L1.2 21.5 L9 21.5 M14.5 8.5 L14.5 3.5 L11.5 3.5" stroke="#1e9fdc" stroke-width="1.4" fill="none"/><rect x="4.5" y="1.2" width="6.5" height="3.5" stroke="#1e9fdc" stroke-width="1.3" fill="none"/><path d="M4 8.5 H11 M4 11 H7" stroke="#1e9fdc" stroke-width="1.1"/><circle cx="6" cy="16.5" r="2.3" stroke="#1e9fdc" stroke-width="1.2" fill="none"/><rect x="11.5" y="10.5" width="9.5" height="12" stroke="#1e9fdc" stroke-width="1.3" fill="#fcfcfc"/><path d="M11.5 14.3 H21 M11.5 18 H21 M14.7 14.3 V22.5 M17.9 14.3 V22.5" stroke="#1e9fdc" stroke-width="1"/></svg>
<div style="position:absolute;left:1114px;top:374px;width:23px;height:23px;background:#3dbe78;border:1px solid #6c6c6c"></div>
<svg style="position:absolute;left:1143px;top:376px;" width="17" height="19" viewBox="0 0 17 19"><path d="M4.2 8 L4.2 5.5 A4.3 4.3 0 0 1 12.8 5.5 L12.8 8" stroke="#3dbe78" stroke-width="2.2" fill="none"/><rect x="1" y="8" width="15" height="10.5" fill="#3dbe78"/></svg>
<div style="position:absolute;left:966px;top:410px;width:230px;height:25px;background:#00adef"></div>
<div style="position:absolute;left:970px;top:416px;white-space:nowrap;font-size:13px;line-height:15px;color:#fff;font-weight:bold">Ostatní údaje</div>
<div style="position:absolute;left:1171px;top:412px;width:1px;height:21px;background:#0a93cc"></div>
<svg style="position:absolute;left:1176px;top:417px;" width="15" height="10" viewBox="0 0 15 10"><path d="M1 8.5 L7.5 2 L14 8.5" stroke="#fff" stroke-width="1.4" fill="none"/></svg>
<div style="position:absolute;left:966px;top:435px;width:230px;height:51px;background:#fcfcfc"></div>
<div style="position:absolute;left:973px;top:442px;white-space:nowrap;font-size:12px;line-height:14px;color:#1d4aa6">Vytvořil:</div>
<div style="position:absolute;right:16px;top:442px;white-space:nowrap;font-size:12px;line-height:14px;color:#000;letter-spacing:-0.62px">K2 <span style="color:#2a4f9f">21.06.2021 08:44:09</span></div>
<div style="position:absolute;left:973px;top:456px;width:216px;height:1px;background:#e6e6e6"></div>
<div style="position:absolute;left:973px;top:464px;white-space:nowrap;font-size:12px;line-height:14px;color:#1d4aa6">Změnil:</div>
<div style="position:absolute;right:16px;top:464px;white-space:nowrap;font-size:12px;line-height:14px;color:#000;letter-spacing:-0.62px">K2 <span style="color:#2a4f9f">21.06.2021 09:29:31</span></div>
<div style="position:absolute;left:973px;top:478px;width:216px;height:1px;background:#e6e6e6"></div>
<div style="position:absolute;left:966px;top:678px;width:230px;height:25px;background:#00adef"></div>
<div style="position:absolute;left:970px;top:684px;white-space:nowrap;font-size:13px;line-height:15px;color:#fff;font-weight:bold">Nastavení</div>
<div style="position:absolute;left:1171px;top:680px;width:1px;height:21px;background:#0a93cc"></div>
<svg style="position:absolute;left:1176px;top:685px;" width="15" height="10" viewBox="0 0 15 10"><path d="M1 8.5 L7.5 2 L14 8.5" stroke="#fff" stroke-width="1.4" fill="none"/></svg>
<div style="position:absolute;left:966px;top:703px;width:230px;height:50px;background:#fcfcfc"></div>
<div style="position:absolute;left:980px;top:710px;white-space:nowrap;font-size:12px;line-height:14px;color:#1d4aa6">Období</div>
<div style="position:absolute;left:1092px;top:710px;white-space:nowrap;font-size:12px;line-height:14px;color:#1d4aa6">Sklad</div>
<div style="position:absolute;left:973px;top:724px;width:106px;height:23px;background:#fefde8;border:1px solid #00a8ec"></div>
<div style="position:absolute;left:1085px;top:724px;width:104px;height:23px;background:#fefde8;border:1px solid #00a8ec"></div>
<div style="position:absolute;left:977px;top:730px;white-space:nowrap;font-size:12px;line-height:14px;color:#000">2021</div>
<div style="position:absolute;left:1089px;top:730px;white-space:nowrap;font-size:12px;line-height:14px;color:#000">EXP</div>
<svg style="position:absolute;left:1062px;top:731px;" width="12" height="10" viewBox="0 0 12 10"><rect x="0" y="0" width="2.9" height="2.9" fill="#0053a5"/><rect x="4.1" y="0" width="2.9" height="2.9" fill="#0053a5"/><rect x="8.2" y="0" width="2.9" height="2.9" fill="#0053a5"/><path d="M0.4 4.4 L5.5 8.6 L10.7 4.4" stroke="#0053a5" stroke-width="1.25" fill="none"/></svg>
<svg style="position:absolute;left:1172px;top:731px;" width="12" height="10" viewBox="0 0 12 10"><rect x="0" y="0" width="2.9" height="2.9" fill="#0053a5"/><rect x="4.1" y="0" width="2.9" height="2.9" fill="#0053a5"/><rect x="8.2" y="0" width="2.9" height="2.9" fill="#0053a5"/><path d="M0.4 4.4 L5.5 8.6 L10.7 4.4" stroke="#0053a5" stroke-width="1.25" fill="none"/></svg>
<div style="position:absolute;left:144px;top:569px;width:304px;height:167px;background:#f2f2f2;border:1px solid #a0a0a0;box-shadow:2px 2px 3px rgba(0,0,0,0.35)"></div>
<div style="position:absolute;left:147px;top:571px;width:296px;height:30px;background:#91c9f7"></div>
<div style="position:absolute;left:186px;top:579px;white-space:nowrap;font-size:12px;line-height:14px;">Tovární</div>
<svg style="position:absolute;left:432px;top:580px;" width="6" height="10" viewBox="0 0 6 10"><path d="M0.5 0.5 L5 5 L0.5 9.5 Z" fill="#fff"/></svg>
<div style="position:absolute;left:184px;top:603px;width:259px;height:1px;background:#d7d7d7"></div>
<svg style="position:absolute;left:153px;top:612px;" width="18" height="20" viewBox="0 0 18 20"><path d="M6.8 1.2 H1.7 V18.8 H6.8 V11" stroke="#000" stroke-width="1.2" fill="none"/><path d="M5.2 5.5 H16.9 L12.8 11.3 V15 L9.5 17.6 V11.3 Z" stroke="#000" stroke-width="1.2" fill="none"/></svg>
<div style="position:absolute;left:186px;top:615px;white-space:nowrap;font-size:12px;line-height:14px;">Sloupcový filtr</div>
<div style="position:absolute;right:780px;top:615px;white-space:nowrap;font-size:12px;line-height:14px;">Ctrl+Alt+F</div>
<div style="position:absolute;left:184px;top:639px;width:259px;height:1px;background:#d7d7d7"></div>
<div style="position:absolute;left:186px;top:651px;white-space:nowrap;font-size:12px;line-height:14px;">Přidat/odebrat podmínku filtru</div>
<div style="position:absolute;right:780px;top:651px;white-space:nowrap;font-size:12px;line-height:14px;">Shift+Ctrl+F9</div>
<div style="position:absolute;left:186px;top:681px;white-space:nowrap;font-size:12px;line-height:14px;color:#8d8d8d">Vypnout</div>
<svg style="position:absolute;left:150px;top:706px;" width="24" height="24" viewBox="0 0 24 24"><path d="M1.6 7 V1.6 H6.5 M17.5 1.6 H22.4 V7 M1.6 17 V22.4 H6.5 M17.5 22.4 H22.4 V17" stroke="#000" stroke-width="1.3" fill="none"/><rect x="4.9" y="4.5" width="3" height="16" stroke="#000" stroke-width="1.3" fill="none"/><rect x="10.9" y="4.5" width="3" height="16" stroke="#000" stroke-width="1.3" fill="none"/><rect x="16.9" y="4.5" width="3" height="16" stroke="#000" stroke-width="1.3" fill="none"/></svg>
<div style="position:absolute;left:186px;top:711px;white-space:nowrap;font-size:12px;line-height:14px;">Správa filtrů</div>
<div style="position:absolute;right:780px;top:711px;white-space:nowrap;font-size:12px;line-height:14px;">Shift+Ctrl+Alt+S</div>
<div style="position:absolute;left:442px;top:298px;width:341px;height:305px;background:#f2f2f2;border:1px solid #a0a0a0;box-shadow:2px 2px 3px rgba(0,0,0,0.35)"></div>
<div style="position:absolute;left:445px;top:301px;width:335px;height:30px;background:#91c9f7"></div>
<svg style="position:absolute;left:452px;top:307px;" width="17" height="19" viewBox="0 0 17 19"><path d="M1.2 1.6 H15 L9.4 9 V13.8 L6.5 17.1 V9 Z" stroke="#000" stroke-width="1.25" fill="none" stroke-linejoin="miter"/></svg>
<div style="position:absolute;left:484px;top:309px;white-space:nowrap;font-size:12px;line-height:14px;">Nedoplacené/přeplacené zálohy</div>
<svg style="position:absolute;left:452px;top:337px;" width="17" height="19" viewBox="0 0 17 19"><path d="M1.2 1.6 H15 L9.4 9 V13.8 L6.5 17.1 V9 Z" stroke="#000" stroke-width="1.25" fill="none" stroke-linejoin="miter"/></svg>
<div style="position:absolute;left:484px;top:339px;white-space:nowrap;font-size:12px;line-height:14px;">Nepotvrzené doklady</div>
<svg style="position:absolute;left:452px;top:367px;" width="17" height="19" viewBox="0 0 17 19"><path d="M1.2 1.6 H15 L9.4 9 V13.8 L6.5 17.1 V9 Z" stroke="#000" stroke-width="1.25" fill="none" stroke-linejoin="miter"/></svg>
<div style="position:absolute;left:484px;top:369px;white-space:nowrap;font-size:12px;line-height:14px;">Nevyčerpané PZ v měně</div>
<svg style="position:absolute;left:452px;top:397px;" width="17" height="19" viewBox="0 0 17 19"><path d="M1.2 1.6 H15 L9.4 9 V13.8 L6.5 17.1 V9 Z" stroke="#000" stroke-width="1.25" fill="none" stroke-linejoin="miter"/></svg>
<div style="position:absolute;left:484px;top:399px;white-space:nowrap;font-size:12px;line-height:14px;">Nezap. zálohy-pro 1 odb.</div>
<svg style="position:absolute;left:452px;top:427px;" width="17" height="19" viewBox="0 0 17 19"><path d="M1.2 1.6 H15 L9.4 9 V13.8 L6.5 17.1 V9 Z" stroke="#000" stroke-width="1.25" fill="none" stroke-linejoin="miter"/></svg>
<div style="position:absolute;left:484px;top:429px;white-space:nowrap;font-size:12px;line-height:14px;">Nezap. zálohy-pro všechny odb.</div>
<svg style="position:absolute;left:452px;top:457px;" width="17" height="19" viewBox="0 0 17 19"><path d="M1.2 1.6 H15 L9.4 9 V13.8 L6.5 17.1 V9 Z" stroke="#000" stroke-width="1.25" fill="none" stroke-linejoin="miter"/></svg>
<div style="position:absolute;left:484px;top:459px;white-space:nowrap;font-size:12px;line-height:14px;">Nezaúčtováno</div>
<svg style="position:absolute;left:452px;top:487px;" width="17" height="19" viewBox="0 0 17 19"><path d="M1.2 1.6 H15 L9.4 9 V13.8 L6.5 17.1 V9 Z" stroke="#000" stroke-width="1.25" fill="none" stroke-linejoin="miter"/></svg>
<div style="position:absolute;left:484px;top:489px;white-space:nowrap;font-size:12px;line-height:14px;">Zálohy nepřepnuté na DD</div>
<svg style="position:absolute;left:452px;top:517px;" width="17" height="19" viewBox="0 0 17 19"><path d="M1.2 1.6 H15 L9.4 9 V13.8 L6.5 17.1 V9 Z" stroke="#000" stroke-width="1.25" fill="none" stroke-linejoin="miter"/></svg>
<div style="position:absolute;left:484px;top:519px;white-space:nowrap;font-size:12px;line-height:14px;">Zálohy s datem úč. případu a UZP v různém období</div>
<svg style="position:absolute;left:452px;top:547px;" width="17" height="19" viewBox="0 0 17 19"><path d="M1.2 1.6 H15 L9.4 9 V13.8 L6.5 17.1 V9 Z" stroke="#000" stroke-width="1.25" fill="none" stroke-linejoin="miter"/></svg>
<div style="position:absolute;left:484px;top:549px;white-space:nowrap;font-size:12px;line-height:14px;">Zapl. zálohy-pro 1 odb.</div>
<svg style="position:absolute;left:452px;top:577px;" width="17" height="19" viewBox="0 0 17 19"><path d="M1.2 1.6 H15 L9.4 9 V13.8 L6.5 17.1 V9 Z" stroke="#000" stroke-width="1.25" fill="none" stroke-linejoin="miter"/></svg>
<div style="position:absolute;left:484px;top:579px;white-space:nowrap;font-size:12px;line-height:14px;">Zapl. zálohy-pro všechny odb.</div>
</body></html>
